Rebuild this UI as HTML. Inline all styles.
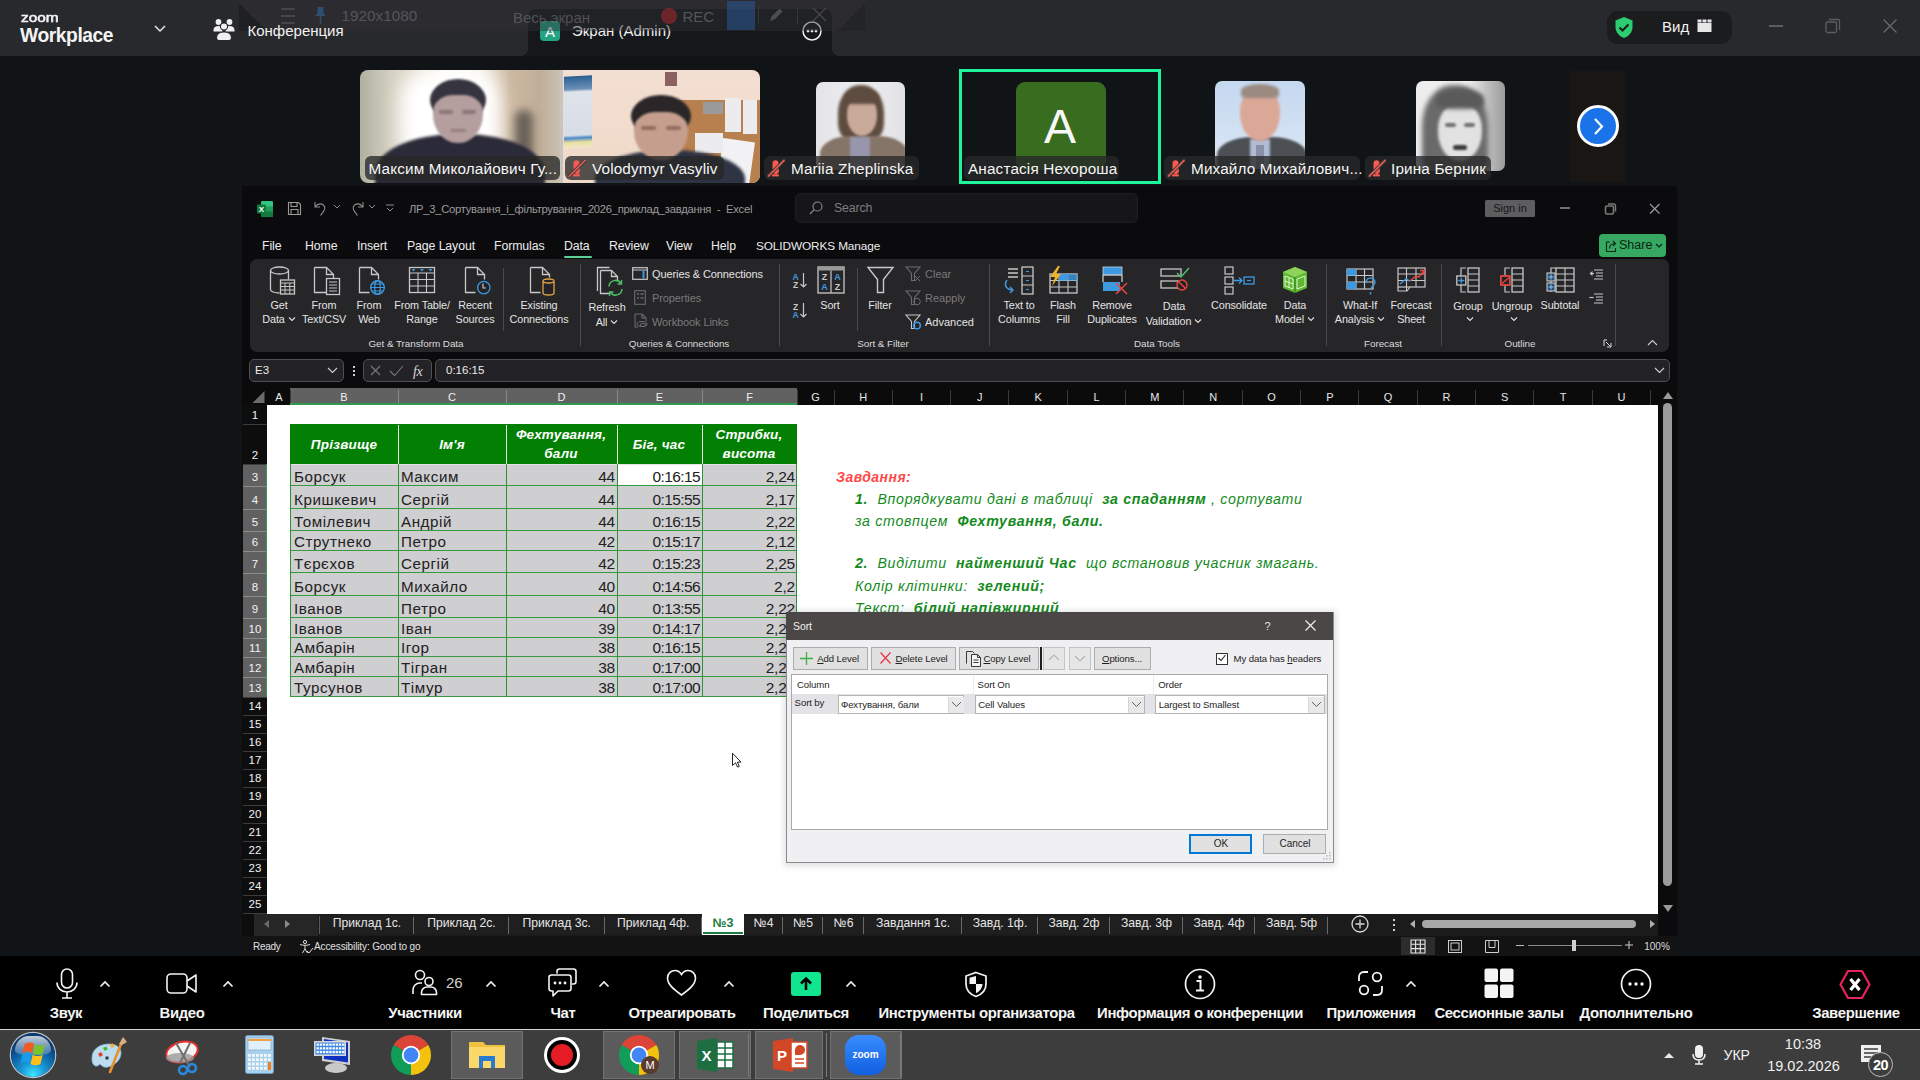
<!DOCTYPE html>
<html><head><meta charset="utf-8">
<style>
*{box-sizing:border-box}
html,body{margin:0;padding:0}
body{width:1920px;height:1080px;position:relative;overflow:hidden;background:#111417;font-family:"Liberation Sans",sans-serif;color:#fff}
.a{position:absolute}
.t{position:absolute;white-space:nowrap;line-height:1}
svg{overflow:visible}
</style></head><body>
<div class="a" style="left:0px;top:0px;width:1920px;height:56px;background:#28292c;"></div>
<div class="t" style="left:20.5px;top:10.99px;font-size:13.6px;color:#f4f4f4;font-weight:400;-webkit-text-stroke:0.6px #f4f4f4;transform:scaleX(1.13);transform-origin:0 0">zoom</div>
<div class="t" style="left:20px;top:26.16px;font-size:19.3px;color:#f4f4f4;font-weight:700;letter-spacing:-0.45px">Workplace</div>
<svg class="a" style="left:154px;top:25px;" width="12" height="8" viewBox="0 0 12 8"><path d="M1 1l5 5 5-5" fill="none" stroke="#e8e8e8" stroke-width="1.5"/></svg>
<svg class="a" style="left:213px;top:18px;" width="22" height="23" viewBox="0 0 22 23"><circle cx="5.5" cy="4" r="2.9" fill="#f0f0f0"/><circle cx="16.5" cy="4" r="2.9" fill="#f0f0f0"/><path d="M0.5 12c0-2.5 2-4 5-4s4 1 4 2v3.5h-9z M21.5 12c0-2.5-2-4-5-4s-4 1-4 2v3.5h9z" fill="#f0f0f0"/><circle cx="11" cy="8.5" r="3.6" fill="#f0f0f0" stroke="#28292c" stroke-width="1.1"/><path d="M3.5 20c0-4 3.5-6 7.5-6s7.5 2 7.5 6c0 1.5-1 2.5-2.5 2.5h-10c-1.5 0-2.5-1-2.5-2.5z" fill="#f0f0f0" stroke="#28292c" stroke-width="1.1"/></svg>
<div class="a" style="left:528px;top:9px;width:304px;height:47px;background:#15171a;border-radius:8px 8px 0 0"></div>
<div class="a" style="left:520px;top:48px;width:8px;height:8px;background:radial-gradient(circle at 0 0,#28292c 8px,#15171a 8px)"></div>
<div class="a" style="left:832px;top:48px;width:8px;height:8px;background:radial-gradient(circle at 100% 0,#28292c 8px,#15171a 8px)"></div>
<div class="a" style="left:540px;top:21px;width:20px;height:20px;background:#24a383;border-radius:4px"></div>
<div class="t" style="left:250px;width:600px;text-align:center;top:23.80px;font-size:15px;color:#ffffff;">A</div>
<div class="t" style="left:572px;top:23.30px;font-size:15px;color:#f2f2f2;">Экран (Admin)</div>
<svg class="a" style="left:802px;top:21px;" width="20" height="20" viewBox="0 0 20 20"><circle cx="10" cy="10" r="9" fill="none" stroke="#f0f0f0" stroke-width="1.5"/><circle cx="6" cy="10" r="1.4" fill="#f0f0f0"/><circle cx="10" cy="10" r="1.4" fill="#f0f0f0"/><circle cx="14" cy="10" r="1.4" fill="#f0f0f0"/></svg>
<div class="a" style="left:239px;top:0px;width:626px;height:31px;background:rgba(48,49,53,0.45);"></div>
<div class="a" style="left:239px;top:2px;width:27px;height:29px;background:linear-gradient(45deg,#1f2022 0%,#1f2022 50%,transparent 50%)"></div>
<div class="a" style="left:838px;top:2px;width:27px;height:29px;background:linear-gradient(-45deg,#232427 0%,#232427 50%,transparent 50%)"></div>
<div class="a" style="left:281px;top:8px;width:14px;height:1.5px;background:#45464a;"></div>
<div class="a" style="left:281px;top:15px;width:14px;height:1.5px;background:#45464a;"></div>
<div class="a" style="left:281px;top:22px;width:14px;height:1.5px;background:#45464a;"></div>
<svg class="a" style="left:314px;top:6px;" width="13" height="19" viewBox="0 0 13 19"><path d="M3.5 1h6v6l2.5 3H1l2.5-3z" fill="#2f4e72"/><path d="M6.5 10v8" stroke="#2f4e72" stroke-width="1.5"/></svg>
<div class="t" style="left:341.5px;top:8.05px;font-size:15.3px;color:#55565a;">1920x1080</div>
<div class="t" style="left:513px;top:10.30px;font-size:15px;color:rgba(120,121,125,0.55);">Весь экран</div>
<div class="a" style="left:661px;top:8px;width:16px;height:16px;border-radius:50%;background:rgba(200,40,50,0.45)"></div>
<div class="t" style="left:682.5px;top:9.30px;font-size:15px;color:rgba(120,121,125,0.6);">REC</div>
<div class="a" style="left:727px;top:1px;width:28px;height:29px;background:rgba(40,100,170,0.45);"></div>
<svg class="a" style="left:767px;top:6px;" width="18" height="18" viewBox="0 0 18 18"><path d="M3 15l1.5-4.5 8-8 3 3-8 8z" fill="#4c4d50"/></svg>
<div class="a" style="left:758px;top:6px;width:1px;height:18px;background:#35363a;"></div>
<div class="a" style="left:797px;top:6px;width:1px;height:18px;background:#35363a;"></div>
<svg class="a" style="left:811px;top:6px;" width="17" height="17" viewBox="0 0 17 17"><path d="M2 2l13 13M15 2L2 15" stroke="#47484c" stroke-width="1.3"/></svg>
<div class="t" style="left:247.5px;top:23.30px;font-size:15px;color:#f2f2f2;">Конференция</div>
<div class="a" style="left:1607px;top:11px;width:125px;height:33px;background:#1b1c1e;border-radius:11px"></div>
<svg class="a" style="left:1614px;top:16px;" width="20" height="23" viewBox="0 0 20 23"><path d="M10 1l8.5 3.5v6.5c0 5.5-4 9.5-8.5 11-4.5-1.5-8.5-5.5-8.5-11V4.5z" fill="#2ecc71"/><path d="M5.5 11.5l3 3 6-6" fill="none" stroke="#1b1c1e" stroke-width="2"/></svg>
<div class="t" style="left:1662px;top:19.30px;font-size:15px;color:#f2f2f2;">Вид</div>
<svg class="a" style="left:1697px;top:19px;" width="16" height="14" viewBox="0 0 16 14"><rect x="0.5" y="4" width="14" height="9" fill="#e6e6e6"/><rect x="0.5" y="0.5" width="4" height="3" fill="#e6e6e6"/><rect x="5.5" y="0.5" width="4" height="3" fill="#e6e6e6"/><rect x="10.5" y="0.5" width="4" height="3" fill="#e6e6e6"/></svg>
<div class="a" style="left:1769px;top:25px;width:14px;height:1.5px;background:#5c5d60;"></div>
<svg class="a" style="left:1825px;top:18px;" width="16" height="16" viewBox="0 0 16 16"><rect x="1" y="4" width="10.5" height="10.5" rx="1.5" fill="none" stroke="#5c5d60" stroke-width="1.3"/><path d="M4 1.5h9a1.5 1.5 0 0 1 1.5 1.5v9" fill="none" stroke="#5c5d60" stroke-width="1.3"/></svg>
<svg class="a" style="left:1882px;top:18px;" width="16" height="16" viewBox="0 0 16 16"><path d="M1.5 1.5l13 13M14.5 1.5l-13 13" stroke="#6a6b6e" stroke-width="1.3"/></svg>
<div class="a" style="left:0px;top:56px;width:1920px;height:130px;background:#111417;"></div>
<div class="a" style="left:360px;top:70px;width:200px;height:113px;overflow:hidden;border-radius:8px 0 0 8px;background:linear-gradient(90deg,#aeb0a0 0%,#d4cfc0 15%,#e6ddd0 28%,#fbf8f2 42%,#f7f0e6 60%,#cdb9a2 75%,#c0ae98 90%,#c8c0b2 100%)">
<div class="a" style="left:40px;top:0px;width:100px;height:100px;border-radius:30%;background:#ffffff;filter:blur(9px)"></div>
<div class="a" style="left:155px;top:40px;width:18px;height:50px;border-radius:8px;background:#6a625a;filter:blur(4px)"></div>
<div class="a" style="left:15px;top:64px;width:170px;height:80px;border-radius:48% 48% 0 0;background:#2b2a38;filter:blur(1.5px)"></div>
<div class="a" style="left:70px;top:9px;width:56px;height:42px;border-radius:50%;background:#36343e;filter:blur(1.2px)"></div>
<div class="a" style="left:73px;top:25px;width:50px;height:48px;border-radius:40% 40% 48% 48%/35% 35% 60% 60%;background:#b49e9e;filter:blur(1.2px)"></div>
<div class="a" style="left:79px;top:40px;width:14px;height:4px;border-radius:2px;background:#6e5a5e;opacity:0.6;filter:blur(1px)"></div>
<div class="a" style="left:102px;top:40px;width:14px;height:4px;border-radius:2px;background:#6e5a5e;opacity:0.6;filter:blur(1px)"></div>
<div class="a" style="left:90px;top:59px;width:16px;height:3px;border-radius:2px;background:#7a5e60;opacity:0.5;filter:blur(1px)"></div>
</div>
<div class="a" style="left:560px;top:70px;width:200px;height:113px;overflow:hidden;border-radius:0 8px 8px 0;background:linear-gradient(180deg,#f3dfd2 0%,#efd9c8 100%)">
<div class="a" style="left:0;top:0;width:3px;height:113px;background:#c8c4c0"></div>
<div class="a" style="left:4px;top:6px;width:28px;height:72px;transform:skewY(-3deg);background:linear-gradient(180deg,#2a5f90 0%,#6c90b8 18%,#dfe3ea 22%,#d8dde6 82%,#4c8ac8 86%,#e8e0a0 92%,#f0e8c8 100%)"></div>
<div class="a" style="left:105px;top:2px;width:12px;height:14px;background:#8a6060"></div>
<div class="a" style="left:119px;top:30px;width:81px;height:83px;background:#b8804e"></div>
<div class="a" style="left:165px;top:28px;width:16px;height:34px;background:#ececee"></div>
<div class="a" style="left:183px;top:30px;width:14px;height:34px;background:#ececee"></div>
<div class="a" style="left:160px;top:70px;width:32px;height:45px;background:#f2f2f4;transform:rotate(8deg)"></div>
<div class="a" style="left:135px;top:63px;width:28px;height:20px;background:#ececee"></div>
<div class="a" style="left:143px;top:32px;width:20px;height:12px;background:#9a9a9a"></div>
<div class="a" style="left:35px;top:80px;width:150px;height:60px;border-radius:48% 48% 0 0;background:#2e3444;filter:blur(1.5px)"></div>
<div class="a" style="left:71px;top:25px;width:60px;height:42px;border-radius:50%;background:#2a2628;filter:blur(1.2px)"></div>
<div class="a" style="left:74px;top:42px;width:54px;height:48px;border-radius:40% 40% 48% 48%/35% 35% 60% 60%;background:#c69e8e;filter:blur(1.2px)"></div>
<div class="a" style="left:81px;top:56px;width:15px;height:4px;border-radius:2px;background:#6e4a40;opacity:0.6;filter:blur(1px)"></div>
<div class="a" style="left:106px;top:56px;width:15px;height:4px;border-radius:2px;background:#6e4a40;opacity:0.6;filter:blur(1px)"></div>
</div>
<div class="a" style="left:364.5px;top:156px;width:195.0px;height:24px;border-radius:6px;background:rgba(40,40,40,0.78)"></div>
<div class="t" style="left:368.5px;top:160.75px;font-size:15.3px;color:#f6f6f6;letter-spacing:0.15px">Максим Миколайович Гу...</div>
<div class="a" style="left:560px;top:156px;width:5px;height:24px;background:#111417;opacity:0"></div>
<div class="a" style="left:565px;top:156px;width:159px;height:24px;border-radius:6px;background:rgba(40,40,40,0.78)"></div>
<svg class="a" style="left:569px;top:160px;" width="17" height="17" viewBox="0 0 17 17"><path d="M4.5 3.5a3 3.2 0 0 1 6 0V9h-6z" fill="#f65a50"/><path d="M5 9h5.8v3.2l-1.6 1.3v.8H6.6v-.8L5 12.2z" fill="#f65a50"/><rect x="4" y="14.2" width="6.8" height="2.2" fill="#f65a50"/><path d="M0 16.5L16.5 0" stroke="#3e3e3e" stroke-width="3.2"/><path d="M0.3 16.2L16.2 0.3" stroke="#f65a50" stroke-width="1.5" stroke-linecap="round"/></svg>
<div class="t" style="left:592px;top:160.75px;font-size:15.3px;color:#f6f6f6;letter-spacing:0.15px">Volodymyr Vasyliv</div>
<div class="a" style="left:816px;top:82px;width:89px;height:88px;overflow:hidden;border-radius:7px;background:linear-gradient(90deg,#e4e4e6,#eeeef0 50%,#e2e2e4)">
<div class="a" style="left:22px;top:3px;width:46px;height:58px;border-radius:48% 48% 35% 35%;background:#5e4c40;filter:blur(1.5px)"></div>
<div class="a" style="left:4px;top:54px;width:88px;height:50px;border-radius:35% 35% 0 0;background:#857568;filter:blur(1px)"></div>
<div class="a" style="left:34px;top:55px;width:20px;height:35px;background:#9896ac;filter:blur(1px)"></div>
<div class="a" style="left:31px;top:14px;width:30px;height:40px;border-radius:45% 45% 50% 50%;background:#c9aa9a;filter:blur(1.2px)"></div>
<div class="a" style="left:29px;top:8px;width:34px;height:14px;border-radius:50% 50% 20% 20%;background:#5e4c40;filter:blur(1.5px)"></div>
</div>
<div class="a" style="left:764px;top:156px;width:155px;height:24px;border-radius:6px;background:rgba(40,40,40,0.78)"></div>
<svg class="a" style="left:768px;top:160px;" width="17" height="17" viewBox="0 0 17 17"><path d="M4.5 3.5a3 3.2 0 0 1 6 0V9h-6z" fill="#f65a50"/><path d="M5 9h5.8v3.2l-1.6 1.3v.8H6.6v-.8L5 12.2z" fill="#f65a50"/><rect x="4" y="14.2" width="6.8" height="2.2" fill="#f65a50"/><path d="M0 16.5L16.5 0" stroke="#3e3e3e" stroke-width="3.2"/><path d="M0.3 16.2L16.2 0.3" stroke="#f65a50" stroke-width="1.5" stroke-linecap="round"/></svg>
<div class="t" style="left:791px;top:160.75px;font-size:15.3px;color:#f6f6f6;letter-spacing:0.15px">Mariia Zheplinska</div>
<div class="a" style="left:959px;top:69px;width:202px;height:115px;background:transparent;border:3px solid #1ef59a"></div>
<div class="a" style="left:1015.5px;top:82px;width:90px;height:88px;background:#386d20;border-radius:9px"></div>
<div class="t" style="left:760px;width:600px;text-align:center;top:102.97px;font-size:48px;color:#f8f8f8;">A</div>
<div class="a" style="left:964px;top:156px;width:155px;height:24px;border-radius:6px;background:rgba(40,40,40,0.78)"></div>
<div class="t" style="left:968px;top:160.75px;font-size:15.3px;color:#f6f6f6;letter-spacing:0.15px">Анастасія Нехороша</div>
<div class="a" style="left:1215px;top:81px;width:90px;height:88px;overflow:hidden;border-radius:7px;background:linear-gradient(180deg,#c4d8f0,#dde8f5)">
<div class="a" style="left:2px;top:56px;width:90px;height:45px;border-radius:40% 40% 0 0;background:#4c4f54;filter:blur(1px)"></div>
<div class="a" style="left:35px;top:58px;width:20px;height:30px;background:#b0bcd4;filter:blur(1px)"></div>
<div class="a" style="left:41px;top:64px;width:8px;height:24px;background:#8890a8"></div>
<div class="a" style="left:25px;top:6px;width:40px;height:54px;border-radius:45% 45% 50% 50%;background:#dba898;filter:blur(1.2px)"></div>
<div class="a" style="left:26px;top:3px;width:38px;height:14px;border-radius:50% 50% 20% 20%;background:#9a8a80;filter:blur(1.5px)"></div>
</div>
<div class="a" style="left:1164px;top:156px;width:196px;height:24px;border-radius:6px;background:rgba(40,40,40,0.78)"></div>
<svg class="a" style="left:1168px;top:160px;" width="17" height="17" viewBox="0 0 17 17"><path d="M4.5 3.5a3 3.2 0 0 1 6 0V9h-6z" fill="#f65a50"/><path d="M5 9h5.8v3.2l-1.6 1.3v.8H6.6v-.8L5 12.2z" fill="#f65a50"/><rect x="4" y="14.2" width="6.8" height="2.2" fill="#f65a50"/><path d="M0 16.5L16.5 0" stroke="#3e3e3e" stroke-width="3.2"/><path d="M0.3 16.2L16.2 0.3" stroke="#f65a50" stroke-width="1.5" stroke-linecap="round"/></svg>
<div class="t" style="left:1191px;top:160.75px;font-size:15.3px;color:#f6f6f6;letter-spacing:0.15px">Михайло Михайлович...</div>
<div class="a" style="left:1416px;top:81px;width:89px;height:90px;overflow:hidden;border-radius:7px;background:linear-gradient(90deg,#ececec,#f4f4f4 55%,#c4c4c4 78%,#9a9a9a)">
<div class="a" style="left:6px;top:4px;width:66px;height:92px;border-radius:45% 45% 20% 20%;background:#6a6a6a;filter:blur(2.5px)"></div>
<div class="a" style="left:22px;top:22px;width:44px;height:58px;border-radius:45% 45% 50% 50%;background:#e2e2e2;filter:blur(1.5px)"></div>
<div class="a" style="left:20px;top:8px;width:48px;height:20px;border-radius:50% 50% 30% 30%;background:#5a5a5a;filter:blur(2px)"></div>
<div class="a" style="left:29px;top:42px;width:11px;height:4px;border-radius:2px;background:#707070;filter:blur(0.8px)"></div>
<div class="a" style="left:48px;top:42px;width:11px;height:4px;border-radius:2px;background:#707070;filter:blur(0.8px)"></div>
<div class="a" style="left:37px;top:64px;width:14px;height:5px;border-radius:3px;background:#3a3a3a;filter:blur(0.8px)"></div>
</div>
<div class="a" style="left:1364.5px;top:156px;width:126.0px;height:24px;border-radius:6px;background:rgba(40,40,40,0.78)"></div>
<svg class="a" style="left:1368.5px;top:160px;" width="17" height="17" viewBox="0 0 17 17"><path d="M4.5 3.5a3 3.2 0 0 1 6 0V9h-6z" fill="#f65a50"/><path d="M5 9h5.8v3.2l-1.6 1.3v.8H6.6v-.8L5 12.2z" fill="#f65a50"/><rect x="4" y="14.2" width="6.8" height="2.2" fill="#f65a50"/><path d="M0 16.5L16.5 0" stroke="#3e3e3e" stroke-width="3.2"/><path d="M0.3 16.2L16.2 0.3" stroke="#f65a50" stroke-width="1.5" stroke-linecap="round"/></svg>
<div class="t" style="left:1391px;top:160.75px;font-size:15.3px;color:#f6f6f6;letter-spacing:0.15px">Ірина Берник</div>
<div class="a" style="left:1569.5px;top:70.5px;width:55px;height:111.5px;background:#1a1614;"></div>
<div class="a" style="left:1577px;top:105px;width:42px;height:42px;border-radius:50%;background:#1a73e8;border:3.5px solid #fff"></div>
<svg class="a" style="left:1590px;top:116px;" width="16" height="22" viewBox="0 0 16 22"><path d="M5 3l7 7.5-7 7.5" fill="none" stroke="#fff" stroke-width="2.2"/></svg>
<div class="a" style="left:242px;top:186px;width:1435px;height:770px;background:#0b0b0d;"></div>
<svg class="a" style="left:257px;top:201px;" width="16" height="16" viewBox="0 0 16 16"><rect x="4" y="0" width="12" height="16" rx="1.5" fill="#1e9e5a"/><rect x="4" y="0" width="12" height="5.5" fill="#33c481" rx="1.5"/><rect x="4" y="10.5" width="12" height="5.5" fill="#107c41" rx="1"/><rect x="0" y="3.5" width="9" height="9" rx="1" fill="#0f7b3f"/><text x="4.5" y="11" font-size="8" font-family="Liberation Sans" font-weight="700" fill="#fff" text-anchor="middle">X</text></svg>
<svg class="a" style="left:287px;top:201px;" width="15" height="15" viewBox="0 0 15 15"><path d="M1.5 1.5h10l2 2v10h-12z M4 1.5v4h6v-4 M4 13.5v-5h7v5" fill="none" stroke="#9a9a9a" stroke-width="1.1"/></svg>
<svg class="a" style="left:313px;top:200px;" width="16" height="16" viewBox="0 0 16 16"><path d="M2 2v5h5 M2.5 6.5c2-3 7-4 9 0 1.5 3-1 5-4 9" fill="none" stroke="#8c8c8c" stroke-width="1.1"/></svg>
<svg class="a" style="left:333px;top:204px;" width="8" height="6" viewBox="0 0 8 6"><path d="M1 1l3 3 3-3" fill="none" stroke="#8c8c8c"/></svg>
<svg class="a" style="left:349px;top:200px;" width="16" height="16" viewBox="0 0 16 16"><path d="M14 2v5h-5 M13.5 6.5c-2-3-7-4-9 0-1.5 3 1 5 4 9" fill="none" stroke="#8c8c8c" stroke-width="1.1"/></svg>
<svg class="a" style="left:368px;top:204px;" width="8" height="6" viewBox="0 0 8 6"><path d="M1 1l3 3 3-3" fill="none" stroke="#8c8c8c"/></svg>
<svg class="a" style="left:385px;top:204px;" width="10" height="9" viewBox="0 0 10 9"><path d="M1 1h8 M2 4l3 3 3-3" fill="none" stroke="#8c8c8c"/></svg>
<div class="t" style="left:409px;top:204.02px;font-size:11.2px;color:#9c9c9c;letter-spacing:-0.25px">ЛР_3_Сортування_і_фільтрування_2026_приклад_завдання&nbsp; -&nbsp; Excel</div>
<div class="a" style="left:795px;top:193px;width:343px;height:30px;background:#161519;border-radius:5px;border:1px solid #1e1d21"></div>
<svg class="a" style="left:808px;top:200px;" width="16" height="16" viewBox="0 0 16 16"><circle cx="9.5" cy="6.5" r="4.5" fill="none" stroke="#8a8a8a" stroke-width="1.1"/><path d="M6.3 9.7L2 14" stroke="#8a8a8a" stroke-width="1.2"/></svg>
<div class="t" style="left:834px;top:202.09px;font-size:12.3px;color:#7e7e80;letter-spacing:-0.1px">Search</div>
<div class="a" style="left:1485px;top:199.5px;width:50px;height:17.5px;background:#5e5d60;border-radius:1.5px"></div>
<div class="t" style="left:1210px;width:600px;text-align:center;top:202.99px;font-size:11px;color:#161616;">Sign in</div>
<div class="a" style="left:1560px;top:207px;width:10px;height:2px;background:#6e6e6e;"></div>
<svg class="a" style="left:1603px;top:202px;" width="14" height="14" viewBox="0 0 14 14"><rect x="2.5" y="4" width="8" height="8" rx="1.5" fill="none" stroke="#7a7a7a" stroke-width="1.6"/><path d="M5 2h5.5a2 2 0 0 1 2 2v5.5" fill="none" stroke="#7a7a7a" stroke-width="1.4"/></svg>
<svg class="a" style="left:1648px;top:202px;" width="13" height="13" viewBox="0 0 13 13"><path d="M2 2l9.5 9.5M11.5 2L2 11.5" stroke="#a0a0a0" stroke-width="1.1"/></svg>
<div class="t" style="left:262px;top:240.09px;font-size:12.3px;color:#ededed;letter-spacing:-0.1px">File</div>
<div class="t" style="left:305px;top:240.09px;font-size:12.3px;color:#ededed;letter-spacing:-0.1px">Home</div>
<div class="t" style="left:357px;top:240.09px;font-size:12.3px;color:#ededed;letter-spacing:-0.1px">Insert</div>
<div class="t" style="left:407px;top:240.09px;font-size:12.3px;color:#ededed;letter-spacing:-0.1px">Page Layout</div>
<div class="t" style="left:494px;top:240.09px;font-size:12.3px;color:#ededed;letter-spacing:-0.1px">Formulas</div>
<div class="t" style="left:564px;top:240.09px;font-size:12.3px;color:#ededed;letter-spacing:-0.1px">Data</div>
<div class="t" style="left:609px;top:240.09px;font-size:12.3px;color:#ededed;letter-spacing:-0.1px">Review</div>
<div class="t" style="left:666px;top:240.09px;font-size:12.3px;color:#ededed;letter-spacing:-0.1px">View</div>
<div class="t" style="left:711px;top:240.09px;font-size:12.3px;color:#ededed;letter-spacing:-0.1px">Help</div>
<div class="t" style="left:756px;top:240.51px;font-size:11.8px;color:#ededed;letter-spacing:-0.1px">SOLIDWORKS Manage</div>
<div class="a" style="left:564px;top:255.5px;width:28px;height:2px;background:#5fcf98;border-radius:1px"></div>
<div class="a" style="left:1599px;top:234px;width:67px;height:23px;background:#36a862;border-radius:4px"></div>
<svg class="a" style="left:1604px;top:239px;" width="14" height="14" viewBox="0 0 14 14"><path d="M6 3H2.5v9.5h9V9 M5.5 9.5c0-3 2-5 5.5-5 M9 2l2.5 2.5L9 7" fill="none" stroke="#0b2a16" stroke-width="1.1"/></svg>
<div class="t" style="left:1619px;top:239.42px;font-size:12.5px;color:#0b1f12;">Share</div>
<svg class="a" style="left:1655px;top:243px;" width="8" height="6" viewBox="0 0 8 6"><path d="M1 1l3 3 3-3" fill="none" stroke="#0b1f12" stroke-width="1.1"/></svg>
<div class="a" style="left:250px;top:259px;width:1419px;height:93px;background:#262528;border-radius:7px"></div>
<div class="a" style="left:503px;top:268px;width:1px;height:63px;background:#4a4a4a;"></div>
<div class="a" style="left:580px;top:264px;width:1px;height:82px;background:#4a4a4a;"></div>
<div class="a" style="left:779px;top:264px;width:1px;height:82px;background:#4a4a4a;"></div>
<div class="a" style="left:857px;top:268px;width:1px;height:63px;background:#4a4a4a;"></div>
<div class="a" style="left:989px;top:264px;width:1px;height:82px;background:#4a4a4a;"></div>
<div class="a" style="left:1326px;top:264px;width:1px;height:82px;background:#4a4a4a;"></div>
<div class="a" style="left:1441px;top:264px;width:1px;height:82px;background:#4a4a4a;"></div>
<div class="a" style="left:1615px;top:264px;width:1px;height:82px;background:#4a4a4a;"></div>
<div class="t" style="left:-21px;width:600px;text-align:center;top:299.86px;font-size:10.8px;color:#e4e4e4;letter-spacing:-0.1px">Get</div>
<div class="t" style="left:-21px;width:600px;text-align:center;top:314.36px;font-size:10.8px;color:#e4e4e4;letter-spacing:-0.1px">Data<svg width="8" height="6" style="margin-left:3px;vertical-align:1px" viewBox="0 0 8 6"><path d="M1 1.5l3 3 3-3" fill="none" stroke="#e0e0e0" stroke-width="1.1"/></svg></div>
<div class="t" style="left:24px;width:600px;text-align:center;top:299.86px;font-size:10.8px;color:#e4e4e4;letter-spacing:-0.1px">From</div>
<div class="t" style="left:24px;width:600px;text-align:center;top:314.36px;font-size:10.8px;color:#e4e4e4;letter-spacing:-0.1px">Text/CSV</div>
<div class="t" style="left:69px;width:600px;text-align:center;top:299.86px;font-size:10.8px;color:#e4e4e4;letter-spacing:-0.1px">From</div>
<div class="t" style="left:69px;width:600px;text-align:center;top:314.36px;font-size:10.8px;color:#e4e4e4;letter-spacing:-0.1px">Web</div>
<div class="t" style="left:122px;width:600px;text-align:center;top:299.86px;font-size:10.8px;color:#e4e4e4;letter-spacing:-0.1px">From Table/</div>
<div class="t" style="left:122px;width:600px;text-align:center;top:314.36px;font-size:10.8px;color:#e4e4e4;letter-spacing:-0.1px">Range</div>
<div class="t" style="left:175px;width:600px;text-align:center;top:299.86px;font-size:10.8px;color:#e4e4e4;letter-spacing:-0.1px">Recent</div>
<div class="t" style="left:175px;width:600px;text-align:center;top:314.36px;font-size:10.8px;color:#e4e4e4;letter-spacing:-0.1px">Sources</div>
<div class="t" style="left:239px;width:600px;text-align:center;top:299.86px;font-size:10.8px;color:#e4e4e4;letter-spacing:-0.1px">Existing</div>
<div class="t" style="left:239px;width:600px;text-align:center;top:314.36px;font-size:10.8px;color:#e4e4e4;letter-spacing:-0.1px">Connections</div>
<div class="t" style="left:307px;width:600px;text-align:center;top:301.86px;font-size:10.8px;color:#e4e4e4;letter-spacing:-0.1px">Refresh</div>
<div class="t" style="left:307px;width:600px;text-align:center;top:316.86px;font-size:10.8px;color:#e4e4e4;letter-spacing:-0.1px">All<svg width="8" height="6" style="margin-left:3px;vertical-align:1px" viewBox="0 0 8 6"><path d="M1 1.5l3 3 3-3" fill="none" stroke="#e0e0e0" stroke-width="1.1"/></svg></div>
<div class="t" style="left:652px;top:268.69px;font-size:11px;color:#e4e4e4;letter-spacing:-0.1px">Queries &amp; Connections</div>
<div class="t" style="left:652px;top:292.69px;font-size:11px;color:#7a7a7a;letter-spacing:-0.1px">Properties</div>
<div class="t" style="left:652px;top:316.69px;font-size:11px;color:#7a7a7a;letter-spacing:-0.1px">Workbook Links</div>
<div class="t" style="left:530px;width:600px;text-align:center;top:299.86px;font-size:10.8px;color:#e4e4e4;letter-spacing:-0.1px">Sort</div>
<div class="t" style="left:580px;width:600px;text-align:center;top:299.86px;font-size:10.8px;color:#e4e4e4;letter-spacing:-0.1px">Filter</div>
<div class="t" style="left:925px;top:268.69px;font-size:11px;color:#7a7a7a;">Clear</div>
<div class="t" style="left:925px;top:292.69px;font-size:11px;color:#7a7a7a;">Reapply</div>
<div class="t" style="left:925px;top:316.69px;font-size:11px;color:#e4e4e4;">Advanced</div>
<div class="t" style="left:719px;width:600px;text-align:center;top:299.86px;font-size:10.8px;color:#e4e4e4;letter-spacing:-0.1px">Text to</div>
<div class="t" style="left:719px;width:600px;text-align:center;top:314.36px;font-size:10.8px;color:#e4e4e4;letter-spacing:-0.1px">Columns</div>
<div class="t" style="left:763px;width:600px;text-align:center;top:299.86px;font-size:10.8px;color:#e4e4e4;letter-spacing:-0.1px">Flash</div>
<div class="t" style="left:763px;width:600px;text-align:center;top:314.36px;font-size:10.8px;color:#e4e4e4;letter-spacing:-0.1px">Fill</div>
<div class="t" style="left:812px;width:600px;text-align:center;top:299.86px;font-size:10.8px;color:#e4e4e4;letter-spacing:-0.1px">Remove</div>
<div class="t" style="left:812px;width:600px;text-align:center;top:314.36px;font-size:10.8px;color:#e4e4e4;letter-spacing:-0.1px">Duplicates</div>
<div class="t" style="left:874px;width:600px;text-align:center;top:300.86px;font-size:10.8px;color:#e4e4e4;letter-spacing:-0.1px">Data</div>
<div class="t" style="left:874px;width:600px;text-align:center;top:315.86px;font-size:10.8px;color:#e4e4e4;letter-spacing:-0.1px">Validation<svg width="8" height="6" style="margin-left:3px;vertical-align:1px" viewBox="0 0 8 6"><path d="M1 1.5l3 3 3-3" fill="none" stroke="#e0e0e0" stroke-width="1.1"/></svg></div>
<div class="t" style="left:939px;width:600px;text-align:center;top:299.86px;font-size:10.8px;color:#e4e4e4;letter-spacing:-0.1px">Consolidate</div>
<div class="t" style="left:995px;width:600px;text-align:center;top:299.86px;font-size:10.8px;color:#e4e4e4;letter-spacing:-0.1px">Data</div>
<div class="t" style="left:995px;width:600px;text-align:center;top:314.36px;font-size:10.8px;color:#e4e4e4;letter-spacing:-0.1px">Model<svg width="8" height="6" style="margin-left:3px;vertical-align:1px" viewBox="0 0 8 6"><path d="M1 1.5l3 3 3-3" fill="none" stroke="#e0e0e0" stroke-width="1.1"/></svg></div>
<div class="t" style="left:1060px;width:600px;text-align:center;top:299.86px;font-size:10.8px;color:#e4e4e4;letter-spacing:-0.1px">What-If</div>
<div class="t" style="left:1060px;width:600px;text-align:center;top:314.36px;font-size:10.8px;color:#e4e4e4;letter-spacing:-0.1px">Analysis<svg width="8" height="6" style="margin-left:3px;vertical-align:1px" viewBox="0 0 8 6"><path d="M1 1.5l3 3 3-3" fill="none" stroke="#e0e0e0" stroke-width="1.1"/></svg></div>
<div class="t" style="left:1111px;width:600px;text-align:center;top:299.86px;font-size:10.8px;color:#e4e4e4;letter-spacing:-0.1px">Forecast</div>
<div class="t" style="left:1111px;width:600px;text-align:center;top:314.36px;font-size:10.8px;color:#e4e4e4;letter-spacing:-0.1px">Sheet</div>
<div class="t" style="left:1168px;width:600px;text-align:center;top:300.86px;font-size:10.8px;color:#e4e4e4;letter-spacing:-0.1px">Group</div>
<div class="t" style="left:1168px;width:600px;text-align:center;top:314.36px;font-size:10.8px;color:#e4e4e4;letter-spacing:-0.1px"><svg width="8" height="6" style="margin-left:3px;vertical-align:1px" viewBox="0 0 8 6"><path d="M1 1.5l3 3 3-3" fill="none" stroke="#e0e0e0" stroke-width="1.1"/></svg></div>
<div class="t" style="left:1212px;width:600px;text-align:center;top:300.86px;font-size:10.8px;color:#e4e4e4;letter-spacing:-0.1px">Ungroup</div>
<div class="t" style="left:1212px;width:600px;text-align:center;top:314.36px;font-size:10.8px;color:#e4e4e4;letter-spacing:-0.1px"><svg width="8" height="6" style="margin-left:3px;vertical-align:1px" viewBox="0 0 8 6"><path d="M1 1.5l3 3 3-3" fill="none" stroke="#e0e0e0" stroke-width="1.1"/></svg></div>
<div class="t" style="left:1260px;width:600px;text-align:center;top:299.86px;font-size:10.8px;color:#e4e4e4;letter-spacing:-0.1px">Subtotal</div>
<div class="t" style="left:116px;width:600px;text-align:center;top:338.62px;font-size:9.9px;color:#dcdcdc;letter-spacing:-0.05px">Get &amp; Transform Data</div>
<div class="t" style="left:379px;width:600px;text-align:center;top:338.62px;font-size:9.9px;color:#dcdcdc;letter-spacing:-0.05px">Queries &amp; Connections</div>
<div class="t" style="left:583px;width:600px;text-align:center;top:338.62px;font-size:9.9px;color:#dcdcdc;letter-spacing:-0.05px">Sort &amp; Filter</div>
<div class="t" style="left:857px;width:600px;text-align:center;top:338.62px;font-size:9.9px;color:#dcdcdc;letter-spacing:-0.05px">Data Tools</div>
<div class="t" style="left:1083px;width:600px;text-align:center;top:338.62px;font-size:9.9px;color:#dcdcdc;letter-spacing:-0.05px">Forecast</div>
<div class="t" style="left:1220px;width:600px;text-align:center;top:338.62px;font-size:9.9px;color:#dcdcdc;letter-spacing:-0.05px">Outline</div>
<svg class="a" style="left:1603px;top:339px;" width="9" height="9" viewBox="0 0 9 9"><path d="M1 7V1h3 M8 4v4H4 M3 3l4.5 4.5" fill="none" stroke="#dcdcdc" stroke-width="1"/></svg>
<svg class="a" style="left:1647px;top:339px;" width="11" height="7" viewBox="0 0 11 7"><path d="M1 6l4.5-4.5L10 6" fill="none" stroke="#cfcfcf" stroke-width="1.1"/></svg>
<div class="a" style="left:249px;top:359px;width:95px;height:23px;background:#232226;border:1px solid #505050;border-radius:5px"></div>
<div class="t" style="left:255px;top:365.27px;font-size:11.5px;color:#ececec;">E3</div>
<svg class="a" style="left:327px;top:367px;" width="11" height="7" viewBox="0 0 11 7"><path d="M1 1l4.5 4.5L10 1" fill="none" stroke="#cfcfcf" stroke-width="1.1"/></svg>
<div class="a" style="left:353px;top:366px;width:2px;height:2.2px;background:#d0d0d0;"></div>
<div class="a" style="left:353px;top:370px;width:2px;height:2.2px;background:#d0d0d0;"></div>
<div class="a" style="left:353px;top:374px;width:2px;height:2.2px;background:#d0d0d0;"></div>
<div class="a" style="left:363px;top:359px;width:69px;height:23px;background:#232226;border:1px solid #505050;border-radius:5px"></div>
<svg class="a" style="left:369px;top:364px;" width="13" height="13" viewBox="0 0 13 13"><path d="M2 2l9 9M11 2l-9 9" stroke="#7a7a7a" stroke-width="1.1"/></svg>
<svg class="a" style="left:389px;top:364px;" width="15" height="13" viewBox="0 0 15 13"><path d="M1 7l4.5 4.5L14 2" fill="none" stroke="#7a7a7a" stroke-width="1.1"/></svg>
<div class="t" style="left:413px;top:365.15px;font-size:14px;color:#d8d8d8;font-family:'Liberation Serif';letter-spacing:-0.5px"><i>fx</i></div>
<div class="a" style="left:435px;top:359px;width:1235px;height:23px;background:#232226;border:1px solid #505050;border-radius:5px"></div>
<div class="t" style="left:446px;top:365.27px;font-size:11.5px;color:#ececec;">0:16:15</div>
<svg class="a" style="left:1654px;top:367px;" width="11" height="7" viewBox="0 0 11 7"><path d="M1 1l4.5 4.5L10 1" fill="none" stroke="#cfcfcf" stroke-width="1.1"/></svg>
<div class="a" style="left:242px;top:914px;width:1416px;height:22px;background:#1b1b1b;"></div>
<div class="a" style="left:242px;top:914px;width:12px;height:22px;background:#0d0d0d;"></div>
<div class="a" style="left:254px;top:914px;width:64px;height:22px;background:#262626;"></div>
<svg class="a" style="left:260px;top:917px;" width="14" height="14" viewBox="0 0 14 14"><polygon points="9,3 9,11 4,7" fill="#6a6a6a"/></svg>
<svg class="a" style="left:280px;top:917px;" width="14" height="14" viewBox="0 0 14 14"><polygon points="5,3 5,11 10,7" fill="#8a8a8a"/></svg>
<div class="a" style="left:319px;top:916px;width:1px;height:18px;background:#5a5a5a;"></div>
<div class="a" style="left:320px;top:915px;width:94px;height:19px;background:#1f1f1f;"></div>
<div class="t" style="left:67.0px;width:600px;text-align:center;top:917.17px;font-size:12.2px;color:#e6e6e6;">Приклад 1с.</div>
<div class="a" style="left:413px;top:917px;width:1px;height:17px;background:#6a6a6a;"></div>
<div class="a" style="left:414px;top:915px;width:95px;height:19px;background:#1f1f1f;"></div>
<div class="t" style="left:161.5px;width:600px;text-align:center;top:917.17px;font-size:12.2px;color:#e6e6e6;">Приклад 2с.</div>
<div class="a" style="left:508px;top:917px;width:1px;height:17px;background:#6a6a6a;"></div>
<div class="a" style="left:509px;top:915px;width:95.5px;height:19px;background:#1f1f1f;"></div>
<div class="t" style="left:256.75px;width:600px;text-align:center;top:917.17px;font-size:12.2px;color:#e6e6e6;">Приклад 3с.</div>
<div class="a" style="left:603.5px;top:917px;width:1px;height:17px;background:#6a6a6a;"></div>
<div class="a" style="left:604.5px;top:915px;width:97.5px;height:19px;background:#1f1f1f;"></div>
<div class="t" style="left:353.25px;width:600px;text-align:center;top:917.17px;font-size:12.2px;color:#e6e6e6;">Приклад 4ф.</div>
<div class="a" style="left:701px;top:917px;width:1px;height:17px;background:#6a6a6a;"></div>
<div class="a" style="left:702px;top:914px;width:42px;height:21px;background:#ffffff;"></div>
<div class="a" style="left:703px;top:932px;width:40px;height:2px;background:#1e7a45;"></div>
<div class="t" style="left:423.0px;width:600px;text-align:center;top:916.92px;font-size:12.5px;color:#1a7a3c;font-weight:700">№3</div>
<div class="a" style="left:744px;top:915px;width:39px;height:19px;background:#1f1f1f;"></div>
<div class="t" style="left:463.5px;width:600px;text-align:center;top:917.17px;font-size:12.2px;color:#e6e6e6;">№4</div>
<div class="a" style="left:782px;top:917px;width:1px;height:17px;background:#6a6a6a;"></div>
<div class="a" style="left:783px;top:915px;width:40px;height:19px;background:#1f1f1f;"></div>
<div class="t" style="left:503.0px;width:600px;text-align:center;top:917.17px;font-size:12.2px;color:#e6e6e6;">№5</div>
<div class="a" style="left:822px;top:917px;width:1px;height:17px;background:#6a6a6a;"></div>
<div class="a" style="left:823px;top:915px;width:41px;height:19px;background:#1f1f1f;"></div>
<div class="t" style="left:543.5px;width:600px;text-align:center;top:917.17px;font-size:12.2px;color:#e6e6e6;">№6</div>
<div class="a" style="left:863px;top:917px;width:1px;height:17px;background:#6a6a6a;"></div>
<div class="a" style="left:864px;top:915px;width:98px;height:19px;background:#1f1f1f;"></div>
<div class="t" style="left:613.0px;width:600px;text-align:center;top:917.17px;font-size:12.2px;color:#e6e6e6;">Завдання 1с.</div>
<div class="a" style="left:961px;top:917px;width:1px;height:17px;background:#6a6a6a;"></div>
<div class="a" style="left:962px;top:915px;width:76px;height:19px;background:#1f1f1f;"></div>
<div class="t" style="left:700.0px;width:600px;text-align:center;top:917.17px;font-size:12.2px;color:#e6e6e6;">Завд. 1ф.</div>
<div class="a" style="left:1037px;top:917px;width:1px;height:17px;background:#6a6a6a;"></div>
<div class="a" style="left:1038px;top:915px;width:72px;height:19px;background:#1f1f1f;"></div>
<div class="t" style="left:774.0px;width:600px;text-align:center;top:917.17px;font-size:12.2px;color:#e6e6e6;">Завд. 2ф</div>
<div class="a" style="left:1109px;top:917px;width:1px;height:17px;background:#6a6a6a;"></div>
<div class="a" style="left:1110px;top:915px;width:73px;height:19px;background:#1f1f1f;"></div>
<div class="t" style="left:846.5px;width:600px;text-align:center;top:917.17px;font-size:12.2px;color:#e6e6e6;">Завд. 3ф</div>
<div class="a" style="left:1182px;top:917px;width:1px;height:17px;background:#6a6a6a;"></div>
<div class="a" style="left:1183px;top:915px;width:72px;height:19px;background:#1f1f1f;"></div>
<div class="t" style="left:919.0px;width:600px;text-align:center;top:917.17px;font-size:12.2px;color:#e6e6e6;">Завд. 4ф</div>
<div class="a" style="left:1254px;top:917px;width:1px;height:17px;background:#6a6a6a;"></div>
<div class="a" style="left:1255px;top:915px;width:73px;height:19px;background:#1f1f1f;"></div>
<div class="t" style="left:991.5px;width:600px;text-align:center;top:917.17px;font-size:12.2px;color:#e6e6e6;">Завд. 5ф</div>
<div class="a" style="left:1327px;top:917px;width:1px;height:17px;background:#6a6a6a;"></div>
<svg class="a" style="left:1350px;top:914px;" width="20" height="20" viewBox="0 0 20 20"><circle cx="10" cy="10" r="8" fill="none" stroke="#d8d8d8" stroke-width="1.3"/><path d="M10 5.5v9M5.5 10h9" stroke="#d8d8d8" stroke-width="1.3"/></svg>
<div class="a" style="left:1393px;top:919px;width:2px;height:2.2px;background:#d0d0d0;"></div>
<div class="a" style="left:1393px;top:924px;width:2px;height:2.2px;background:#d0d0d0;"></div>
<div class="a" style="left:1393px;top:929px;width:2px;height:2.2px;background:#d0d0d0;"></div>
<svg class="a" style="left:1405px;top:917px;" width="14" height="14" viewBox="0 0 14 14"><polygon points="10,3 10,11 5,7" fill="#b0b0b0"/></svg>
<div class="a" style="left:1422px;top:920px;width:214px;height:8px;background:#a8a8a8;border-radius:4px"></div>
<svg class="a" style="left:1645px;top:917px;" width="14" height="14" viewBox="0 0 14 14"><polygon points="5,3 5,11 10,7" fill="#b0b0b0"/></svg>
<div class="a" style="left:242px;top:936px;width:1435px;height:20px;background:#131313;"></div>
<div class="t" style="left:253px;top:941.53px;font-size:10px;color:#e0e0e0;letter-spacing:-0.3px">Ready</div>
<svg class="a" style="left:298px;top:939px;" width="16" height="16" viewBox="0 0 16 16"><circle cx="7" cy="3" r="1.6" fill="none" stroke="#ddd"/><path d="M2 5.5c2 1 8 1 10 0 M7 6v4 M4.5 14l2.5-4 2.5 4 M9 12l2 2 4-5" fill="none" stroke="#ddd" stroke-width="1"/></svg>
<div class="t" style="left:314px;top:941.53px;font-size:10px;color:#e0e0e0;letter-spacing:-0.12px">Accessibility: Good to go</div>
<div class="a" style="left:1401px;top:937px;width:34px;height:18px;background:#2c2c2c;"></div>
<svg class="a" style="left:1410px;top:939px;" width="16" height="15" viewBox="0 0 16 15"><path d="M1 1h14v13H1z M1 5.3h14 M1 9.6h14 M5.6 1v13 M10.3 1v13" fill="none" stroke="#e6e6e6" stroke-width="1.1"/></svg>
<svg class="a" style="left:1447px;top:939px;" width="16" height="15" viewBox="0 0 16 15"><rect x="1.5" y="1.5" width="13" height="12" fill="none" stroke="#cfcfcf"/><rect x="4" y="4" width="8" height="7" fill="none" stroke="#cfcfcf"/></svg>
<svg class="a" style="left:1484px;top:939px;" width="16" height="15" viewBox="0 0 16 15"><path d="M1.5 1.5h13v12h-13z M5 1.5v7h6v-7" fill="none" stroke="#cfcfcf"/></svg>
<div class="a" style="left:1516px;top:945px;width:8px;height:1px;background:#bcbcbc;"></div>
<div class="a" style="left:1528px;top:945px;width:94px;height:1px;background:#8a8a8a;"></div>
<div class="a" style="left:1572px;top:940px;width:4px;height:11px;background:#cfcfcf;"></div>
<svg class="a" style="left:1624px;top:940px;" width="10" height="10" viewBox="0 0 10 10"><path d="M5 1v8M1 5h8" stroke="#cfcfcf"/></svg>
<div class="t" style="left:1357px;width:600px;text-align:center;top:941.53px;font-size:10px;color:#dcdcdc;">100%</div>
<svg class="a" style="left:269px;top:266px;" width="28" height="30" viewBox="0 0 28 30"><path d="M1.5 4.5v19c0 2 4 3.5 9 3.5 M1.5 4.5c0-2 4-3.5 9-3.5s9 1.5 9 3.5-4 3.5-9 3.5-9-1.5-9-3.5 M19.5 4.5v9" fill="none" stroke="#c8c8c8" stroke-width="1.3"/><rect x="11.5" y="14" width="14" height="14" fill="#2a2a2a" stroke="#c8c8c8" stroke-width="1.3"/><path d="M11.5 17h14 M11.5 20.5h14 M11.5 24h14 M16 17v11 M20.8 17v11" stroke="#c8c8c8" stroke-width="1"/></svg>
<svg class="a" style="left:313px;top:266px;" width="28" height="30" viewBox="0 0 28 30"><path d="M1.5 1.5h12l7 7v4 M1.5 1.5v25h11.5 M13.5 1.5v7h7" fill="none" stroke="#c8c8c8" stroke-width="1.3"/><rect x="13.5" y="12.5" width="13" height="16" fill="#232226" stroke="#c8c8c8" stroke-width="1.3"/><path d="M16 16h8M16 19h8M16 22h8M16 25h8" stroke="#c8c8c8" stroke-width="1.1"/></svg>
<svg class="a" style="left:358px;top:266px;" width="28" height="30" viewBox="0 0 28 30"><path d="M1.5 1.5h12l7 7v5 M1.5 1.5v25h10 M13.5 1.5v7h7" fill="none" stroke="#c8c8c8" stroke-width="1.3"/><circle cx="19.5" cy="21.5" r="6.8" fill="#232226" stroke="#3d9ae0" stroke-width="1.4"/><ellipse cx="19.5" cy="21.5" rx="2.8" ry="6.8" fill="none" stroke="#3d9ae0" stroke-width="1.2"/><path d="M12.7 21.5h13.6 M14 18h11 M14 25h11" stroke="#3d9ae0" stroke-width="1.1"/></svg>
<svg class="a" style="left:408px;top:266px;" width="28" height="28" viewBox="0 0 28 28"><rect x="1.5" y="1.5" width="25" height="25" fill="none" stroke="#c8c8c8" stroke-width="1.3"/><path d="M1.5 7h25 M1.5 13.5h25 M1.5 20h25 M10 7v19.5 M18.5 7v19.5" stroke="#c8c8c8" stroke-width="1.1"/><path d="M3.5 3h4l-2 2.5z M12 3h4l-2 2.5z M20.5 3h4l-2 2.5z" fill="#3d9ae0"/></svg>
<svg class="a" style="left:464px;top:266px;" width="28" height="30" viewBox="0 0 28 30"><path d="M1.5 1.5h12l7 7v5 M1.5 1.5v25h10 M13.5 1.5v7h7" fill="none" stroke="#c8c8c8" stroke-width="1.3"/><circle cx="19.8" cy="21.6" r="6.2" fill="#232226" stroke="#3d9ae0" stroke-width="1.3"/><path d="M19 17.5v4.5h3" fill="none" stroke="#c8c8c8" stroke-width="1.2"/></svg>
<svg class="a" style="left:529px;top:266px;" width="28" height="30" viewBox="0 0 28 30"><path d="M1.5 1.5h12l7 7v3 M1.5 1.5v25h10 M13.5 1.5v7h7" fill="none" stroke="#c8c8c8" stroke-width="1.3"/><path d="M14 15c0-1.3 2.5-2 5.5-2s5.5.7 5.5 2v12c0 1.3-2.5 2-5.5 2s-5.5-.7-5.5-2z M14 15c0 1.3 2.5 2 5.5 2s5.5-.7 5.5-2" fill="#232226" stroke="#e3a445" stroke-width="1.3"/></svg>
<svg class="a" style="left:596px;top:266px;" width="28" height="30" viewBox="0 0 28 30"><path d="M1.5 25V1.5h12" fill="none" stroke="#c8c8c8" stroke-width="1.3"/><path d="M4.5 4.5h11l6 6v4 M4.5 4.5v23h9 M15.5 4.5v6h6" fill="none" stroke="#c8c8c8" stroke-width="1.3"/><path d="M13 20.5a6.5 6.5 0 0 1 12-3 M26 23a6.5 6.5 0 0 1-12 3" fill="none" stroke="#4cc06a" stroke-width="1.5"/><path d="M25.5 14v4h-4 M13.5 30v-4h4" fill="none" stroke="#4cc06a" stroke-width="1.4"/></svg>
<svg class="a" style="left:632px;top:267px;" width="16" height="13" viewBox="0 0 16 13"><rect x="0.7" y="0.7" width="14.6" height="11.6" fill="none" stroke="#c8c8c8" stroke-width="1.2"/><path d="M0.7 3h14.6" stroke="#c8c8c8"/><rect x="10.5" y="3.5" width="2" height="8" fill="#3d9ae0"/></svg>
<svg class="a" style="left:634px;top:290px;" width="12" height="15" viewBox="0 0 12 15"><rect x="0.7" y="0.7" width="10.6" height="13.6" fill="none" stroke="#6c6c6c" stroke-width="1.1"/><path d="M3 4h2M3 8h2M6.5 4h3M6.5 8h3" stroke="#6c6c6c" stroke-width="1.4"/></svg>
<svg class="a" style="left:634px;top:313px;" width="15" height="15" viewBox="0 0 15 15"><path d="M1 1h7l4 4v3 M1 1v13h3 M8 1v4h4" fill="none" stroke="#6c6c6c" stroke-width="1.1"/><ellipse cx="8" cy="11" rx="5" ry="2.5" fill="none" stroke="#6c6c6c"/><ellipse cx="9" cy="12" rx="3" ry="1.5" fill="none" stroke="#6c6c6c"/></svg>
<svg class="a" style="left:791px;top:272px;" width="16" height="17" viewBox="0 0 16 17"><text x="4.5" y="7.5" font-size="8.5" font-weight="700" font-family="Liberation Sans" fill="#3d9ae0" text-anchor="middle">A</text><text x="4.5" y="15.5" font-size="8.5" font-weight="700" font-family="Liberation Sans" fill="#c8c8c8" text-anchor="middle">Z</text><path d="M12.5 1v14 M9.5 12l3 3 3-3" fill="none" stroke="#c8c8c8" stroke-width="1.2"/></svg>
<svg class="a" style="left:791px;top:302px;" width="16" height="17" viewBox="0 0 16 17"><text x="4.5" y="7.5" font-size="8.5" font-weight="700" font-family="Liberation Sans" fill="#c8c8c8" text-anchor="middle">Z</text><text x="4.5" y="15.5" font-size="8.5" font-weight="700" font-family="Liberation Sans" fill="#3d9ae0" text-anchor="middle">A</text><path d="M12.5 1v14 M9.5 12l3 3 3-3" fill="none" stroke="#c8c8c8" stroke-width="1.2"/></svg>
<svg class="a" style="left:817px;top:266px;" width="28" height="28" viewBox="0 0 28 28"><rect x="1" y="1" width="26" height="26" fill="none" stroke="#c8c8c8" stroke-width="1.3"/><rect x="1" y="1" width="26" height="3.5" fill="#9a9a9a"/><path d="M14 4.5v22.5" stroke="#c8c8c8" stroke-width="1.2"/><text x="7.5" y="14" font-size="9" font-weight="700" font-family="Liberation Sans" fill="#c8c8c8" text-anchor="middle">Z</text><text x="7.5" y="24" font-size="9" font-weight="700" font-family="Liberation Sans" fill="#3d9ae0" text-anchor="middle">A</text><text x="20.5" y="14" font-size="9" font-weight="700" font-family="Liberation Sans" fill="#3d9ae0" text-anchor="middle">A</text><text x="20.5" y="24" font-size="9" font-weight="700" font-family="Liberation Sans" fill="#c8c8c8" text-anchor="middle">Z</text></svg>
<svg class="a" style="left:867px;top:266px;" width="28" height="28" viewBox="0 0 28 28"><path d="M1 1.5h25l-9.5 12v13h-6v-13z" fill="none" stroke="#c8c8c8" stroke-width="1.4"/></svg>
<svg class="a" style="left:905px;top:266px;" width="17" height="16" viewBox="0 0 17 16"><path d="M1 1h14l-5.5 6.5v7h-3v-7z" fill="none" stroke="#6c6c6c" stroke-width="1.1"/><path d="M10 10l5 5M15 10l-5 5" stroke="#6c6c6c"/></svg>
<svg class="a" style="left:905px;top:290px;" width="17" height="16" viewBox="0 0 17 16"><path d="M1 1h14l-5.5 6.5v7h-3v-7z" fill="none" stroke="#6c6c6c" stroke-width="1.1"/><circle cx="12" cy="11.5" r="3.3" fill="none" stroke="#6c6c6c"/></svg>
<svg class="a" style="left:905px;top:314px;" width="17" height="16" viewBox="0 0 17 16"><path d="M1 1h14l-5.5 6.5v7h-3v-7z" fill="none" stroke="#c8c8c8" stroke-width="1.1"/><circle cx="12" cy="11.5" r="3.3" fill="none" stroke="#3d9ae0" stroke-width="1.5"/></svg>
<svg class="a" style="left:1003px;top:266px;" width="32" height="29" viewBox="0 0 32 29"><path d="M5 3h10M5 7h10M5 11h10" stroke="#c8c8c8" stroke-width="1.4"/><path d="M4 14c-3 4-2 9 5 10 M7 21l3 3-3 3" fill="none" stroke="#3d9ae0" stroke-width="1.4"/><rect x="19" y="1" width="11" height="27" fill="none" stroke="#c8c8c8" stroke-width="1.3"/><path d="M19 10h11M19 19h11" stroke="#c8c8c8" stroke-width="1.2"/><path d="M23 5.5h3M23 14.5h3M23 23.5h3" stroke="#3d9ae0" stroke-width="1.2"/></svg>
<svg class="a" style="left:1048px;top:266px;" width="30" height="29" viewBox="0 0 30 29"><rect x="2" y="8" width="27" height="19" fill="none" stroke="#c8c8c8" stroke-width="1.3"/><path d="M2 14.5h27M2 21h27M11 8v19M20 8v19" stroke="#c8c8c8" stroke-width="1.1"/><rect x="11" y="8" width="9" height="6.5" fill="#3d9ae0"/><rect x="20" y="8" width="9" height="6.5" fill="#3d9ae0" opacity="0.8"/><path d="M10 0l-8 11h5l-3 9 9-12h-5l4-8z" fill="#f0b429"/></svg>
<svg class="a" style="left:1102px;top:266px;" width="28" height="30" viewBox="0 0 28 30"><rect x="1" y="1" width="19" height="8" fill="#3d9ae0"/><rect x="1" y="1" width="19" height="8" fill="none" stroke="#bcd6ee" stroke-width="0.8"/><rect x="1" y="16" width="17" height="9" fill="#3d9ae0"/><path d="M1 9v7 M20 9v7 M20 9h0" stroke="#c8c8c8" stroke-width="1.3"/><path d="M1 9h19" stroke="#c8c8c8"/><path d="M14 17l11 11M25 17l-11 11" stroke="#e8473c" stroke-width="1.5"/></svg>
<svg class="a" style="left:1160px;top:266px;" width="32" height="30" viewBox="0 0 32 30"><rect x="1" y="3" width="20" height="7" fill="none" stroke="#c8c8c8" stroke-width="1.3"/><rect x="1" y="15" width="17" height="7" fill="none" stroke="#c8c8c8" stroke-width="1.3"/><path d="M17 7l4 4 8-9" fill="none" stroke="#4cc06a" stroke-width="1.5"/><circle cx="22" cy="19" r="5" fill="#232226" stroke="#e8473c" stroke-width="1.4"/><path d="M18.5 15.5l7 7" stroke="#e8473c" stroke-width="1.4"/></svg>
<svg class="a" style="left:1224px;top:266px;" width="32" height="29" viewBox="0 0 32 29"><rect x="1" y="1" width="8" height="7" fill="none" stroke="#c8c8c8" stroke-width="1.2"/><rect x="1" y="11" width="8" height="7" fill="none" stroke="#c8c8c8" stroke-width="1.2"/><rect x="1" y="21" width="8" height="7" fill="none" stroke="#c8c8c8" stroke-width="1.2"/><path d="M9 14.5h9 M15 11.5l3 3-3 3" fill="none" stroke="#3d9ae0" stroke-width="1.3"/><rect x="20" y="11" width="10" height="7" fill="none" stroke="#3d9ae0" stroke-width="1.3"/><path d="M23 14.5h4" stroke="#3d9ae0" stroke-width="1.2"/></svg>
<svg class="a" style="left:1281px;top:266px;" width="28" height="28" viewBox="0 0 28 28"><path d="M14 1l12 5v16l-12 5-12-5V6z" fill="#5cb82e"/><path d="M14 1l12 5-12 5-12-5z" fill="#8fd35a"/><path d="M14 11v16" stroke="#2f7a1a"/><path d="M16 13l8-3v10l-8 3z" fill="none" stroke="#e6f5da" stroke-width="1"/><path d="M4 10l8 3v10l-8-3z M8 12v10 M4 15l8 3" fill="none" stroke="#e6f5da" stroke-width="1"/></svg>
<svg class="a" style="left:1346px;top:266px;" width="32" height="30" viewBox="0 0 32 30"><rect x="1" y="3" width="26" height="20" fill="none" stroke="#c8c8c8" stroke-width="1.2"/><path d="M1 9.5h26M1 16h26M10 3v20M18.5 3v20" stroke="#c8c8c8" stroke-width="1.1"/><rect x="1" y="3" width="9" height="6.5" fill="#3d9ae0"/><rect x="1" y="16" width="9" height="7" fill="#3d9ae0"/><path d="M20 17c0-3 2-5 4.5-5s4.5 2 4.5 4.5c0 3-4 3.5-4 6.5 M24.5 26v2.5" fill="none" stroke="#3d9ae0" stroke-width="1.5"/></svg>
<svg class="a" style="left:1397px;top:266px;" width="30" height="28" viewBox="0 0 30 28"><rect x="1" y="2" width="27" height="19" fill="none" stroke="#c8c8c8" stroke-width="1.2"/><path d="M1 8h27M1 14.5h27M9.5 2v23M19 2v19" stroke="#c8c8c8" stroke-width="1.1"/><path d="M1 21v4h9l3-4" fill="none" stroke="#c8c8c8" stroke-width="1.2"/><path d="M3 18l6-5 4 2" fill="none" stroke="#3d9ae0" stroke-width="1.4"/><path d="M13 15l6-5 3 1 5-6 M23 4.5h4v4" fill="none" stroke="#e8473c" stroke-width="1.4"/></svg>
<svg class="a" style="left:1456px;top:266px;" width="26" height="28" viewBox="0 0 26 28"><path d="M10 2h-5v24h5" fill="none" stroke="#c8c8c8" stroke-width="1.2"/><rect x="12" y="2" width="11" height="24" fill="none" stroke="#c8c8c8" stroke-width="1.3"/><path d="M12 8h11M12 14h11M12 20h11" stroke="#c8c8c8" stroke-width="1.1"/><rect x="0.8" y="10" width="9" height="9" fill="#232226" stroke="#c8c8c8" stroke-width="1.3"/><path d="M5.3 11.5v6M2.3 14.5h6" stroke="#3d9ae0" stroke-width="1.3"/></svg>
<svg class="a" style="left:1500px;top:266px;" width="26" height="28" viewBox="0 0 26 28"><path d="M10 2h-5v24h5" fill="none" stroke="#c8c8c8" stroke-width="1.2"/><rect x="12" y="2" width="11" height="24" fill="none" stroke="#c8c8c8" stroke-width="1.3"/><path d="M12 8h11M12 14h11M12 20h11" stroke="#c8c8c8" stroke-width="1.1"/><rect x="0.8" y="10" width="9" height="9" fill="#232226" stroke="#e8473c" stroke-width="1.3"/><path d="M2 17.5l7-6" stroke="#e8473c" stroke-width="1.3"/><rect x="0.8" y="10" width="9" height="9" fill="none" stroke="#e8473c" stroke-width="1.3"/></svg>
<svg class="a" style="left:1546px;top:266px;" width="30" height="28" viewBox="0 0 30 28"><path d="M10 2h-5v24" fill="none" stroke="#c8c8c8" stroke-width="1.2"/><rect x="10" y="2" width="18" height="24" fill="none" stroke="#c8c8c8" stroke-width="1.3"/><path d="M10 8h18M10 14h18M10 20h18M19 2v24" stroke="#c8c8c8" stroke-width="1.1"/><rect x="1" y="7" width="8" height="8" fill="#2a4f72" stroke="#c8c8c8" stroke-width="1.1"/><rect x="1" y="17" width="8" height="8" fill="#2a4f72" stroke="#c8c8c8" stroke-width="1.1"/><path d="M5 8.5v5M2.5 11h5M5 18.5v5M2.5 21h5" stroke="#8cc4f0" stroke-width="1.1"/></svg>
<svg class="a" style="left:1589px;top:268px;" width="15" height="12" viewBox="0 0 15 12"><path d="M5 2h9M7 5h7M7 8h7M5 11h9" stroke="#c8c8c8" stroke-width="1.2"/><path d="M0.5 5.5l3-2.5v5z" fill="#c8c8c8"/><path d="M1 5.5h4" stroke="#c8c8c8"/></svg>
<svg class="a" style="left:1589px;top:292px;" width="15" height="12" viewBox="0 0 15 12"><path d="M5 2h9M7 5h7M7 8h7M5 11h9" stroke="#c8c8c8" stroke-width="1.2"/><path d="M0.5 5.5h4" stroke="#c8c8c8" stroke-width="1.2"/></svg>
<div class="a" style="left:242px;top:383px;width:1435px;height:22px;background:#0b0b0b;"></div>
<svg class="a" style="left:243px;top:388px;" width="24" height="17" viewBox="0 0 24 17"><polygon points="21.5,3 21.5,15 9.5,15" fill="#6b6b6b"/></svg>
<div class="a" style="left:290px;top:388px;width:108px;height:17px;background:#616161;"></div>
<div class="a" style="left:398px;top:388px;width:108px;height:17px;background:#616161;"></div>
<div class="a" style="left:506px;top:388px;width:111px;height:17px;background:#616161;"></div>
<div class="a" style="left:617px;top:388px;width:85px;height:17px;background:#616161;"></div>
<div class="a" style="left:702px;top:388px;width:95px;height:17px;background:#616161;"></div>
<div class="t" style="left:-21.0px;width:600px;text-align:center;top:391.69px;font-size:11px;color:#e8e8e8;">A</div>
<div class="a" style="left:289.5px;top:390px;width:1px;height:15px;background:#3a3a3a;"></div>
<div class="t" style="left:44.0px;width:600px;text-align:center;top:391.69px;font-size:11px;color:#f0f0f0;">B</div>
<div class="a" style="left:397.5px;top:390px;width:1px;height:15px;background:#8a8a8a;"></div>
<div class="t" style="left:152.0px;width:600px;text-align:center;top:391.69px;font-size:11px;color:#f0f0f0;">C</div>
<div class="a" style="left:505.5px;top:390px;width:1px;height:15px;background:#8a8a8a;"></div>
<div class="t" style="left:261.5px;width:600px;text-align:center;top:391.69px;font-size:11px;color:#f0f0f0;">D</div>
<div class="a" style="left:616.5px;top:390px;width:1px;height:15px;background:#8a8a8a;"></div>
<div class="t" style="left:359.5px;width:600px;text-align:center;top:391.69px;font-size:11px;color:#f0f0f0;">E</div>
<div class="a" style="left:701.5px;top:390px;width:1px;height:15px;background:#8a8a8a;"></div>
<div class="t" style="left:449.5px;width:600px;text-align:center;top:391.69px;font-size:11px;color:#f0f0f0;">F</div>
<div class="a" style="left:796.5px;top:390px;width:1px;height:15px;background:#3a3a3a;"></div>
<div class="t" style="left:515.5px;width:600px;text-align:center;top:391.69px;font-size:11px;color:#e8e8e8;">G</div>
<div class="a" style="left:833.5px;top:390px;width:1px;height:15px;background:#3a3a3a;"></div>
<div class="t" style="left:563.165px;width:600px;text-align:center;top:391.69px;font-size:11px;color:#e8e8e8;">H</div>
<div class="a" style="left:891.83px;top:390px;width:1px;height:15px;background:#3a3a3a;"></div>
<div class="t" style="left:621.4950000000001px;width:600px;text-align:center;top:391.69px;font-size:11px;color:#e8e8e8;">I</div>
<div class="a" style="left:950.1600000000001px;top:390px;width:1px;height:15px;background:#3a3a3a;"></div>
<div class="t" style="left:679.825px;width:600px;text-align:center;top:391.69px;font-size:11px;color:#e8e8e8;">J</div>
<div class="a" style="left:1008.4900000000001px;top:390px;width:1px;height:15px;background:#3a3a3a;"></div>
<div class="t" style="left:738.1550000000002px;width:600px;text-align:center;top:391.69px;font-size:11px;color:#e8e8e8;">K</div>
<div class="a" style="left:1066.8200000000002px;top:390px;width:1px;height:15px;background:#3a3a3a;"></div>
<div class="t" style="left:796.4850000000001px;width:600px;text-align:center;top:391.69px;font-size:11px;color:#e8e8e8;">L</div>
<div class="a" style="left:1125.15px;top:390px;width:1px;height:15px;background:#3a3a3a;"></div>
<div class="t" style="left:854.815px;width:600px;text-align:center;top:391.69px;font-size:11px;color:#e8e8e8;">M</div>
<div class="a" style="left:1183.48px;top:390px;width:1px;height:15px;background:#3a3a3a;"></div>
<div class="t" style="left:913.145px;width:600px;text-align:center;top:391.69px;font-size:11px;color:#e8e8e8;">N</div>
<div class="a" style="left:1241.81px;top:390px;width:1px;height:15px;background:#3a3a3a;"></div>
<div class="t" style="left:971.4749999999999px;width:600px;text-align:center;top:391.69px;font-size:11px;color:#e8e8e8;">O</div>
<div class="a" style="left:1300.1399999999999px;top:390px;width:1px;height:15px;background:#3a3a3a;"></div>
<div class="t" style="left:1029.8049999999998px;width:600px;text-align:center;top:391.69px;font-size:11px;color:#e8e8e8;">P</div>
<div class="a" style="left:1358.4699999999998px;top:390px;width:1px;height:15px;background:#3a3a3a;"></div>
<div class="t" style="left:1088.1349999999998px;width:600px;text-align:center;top:391.69px;font-size:11px;color:#e8e8e8;">Q</div>
<div class="a" style="left:1416.7999999999997px;top:390px;width:1px;height:15px;background:#3a3a3a;"></div>
<div class="t" style="left:1146.4649999999997px;width:600px;text-align:center;top:391.69px;font-size:11px;color:#e8e8e8;">R</div>
<div class="a" style="left:1475.1299999999997px;top:390px;width:1px;height:15px;background:#3a3a3a;"></div>
<div class="t" style="left:1204.7949999999996px;width:600px;text-align:center;top:391.69px;font-size:11px;color:#e8e8e8;">S</div>
<div class="a" style="left:1533.4599999999996px;top:390px;width:1px;height:15px;background:#3a3a3a;"></div>
<div class="t" style="left:1263.1249999999995px;width:600px;text-align:center;top:391.69px;font-size:11px;color:#e8e8e8;">T</div>
<div class="a" style="left:1591.7899999999995px;top:390px;width:1px;height:15px;background:#3a3a3a;"></div>
<div class="t" style="left:1321.4549999999995px;width:600px;text-align:center;top:391.69px;font-size:11px;color:#e8e8e8;">U</div>
<div class="a" style="left:1650.1199999999994px;top:390px;width:1px;height:15px;background:#3a3a3a;"></div>
<div class="a" style="left:290px;top:403px;width:507px;height:2px;background:#2f9a4f;"></div>
<div class="a" style="left:242px;top:405px;width:25px;height:509px;background:#0d0d0d;"></div>
<div class="a" style="left:243px;top:464px;width:24px;height:22px;background:#616161;"></div>
<div class="a" style="left:243px;top:486px;width:24px;height:23px;background:#616161;"></div>
<div class="a" style="left:243px;top:509px;width:24px;height:22px;background:#616161;"></div>
<div class="a" style="left:243px;top:531px;width:24px;height:20px;background:#616161;"></div>
<div class="a" style="left:243px;top:551px;width:24px;height:22px;background:#616161;"></div>
<div class="a" style="left:243px;top:573px;width:24px;height:23px;background:#616161;"></div>
<div class="a" style="left:243px;top:596px;width:24px;height:22px;background:#616161;"></div>
<div class="a" style="left:243px;top:618px;width:24px;height:20px;background:#616161;"></div>
<div class="a" style="left:243px;top:638px;width:24px;height:19px;background:#616161;"></div>
<div class="a" style="left:243px;top:657px;width:24px;height:20px;background:#616161;"></div>
<div class="a" style="left:243px;top:677px;width:24px;height:20px;background:#616161;"></div>
<div class="t" style="left:-45px;width:600px;text-align:center;top:410.27px;font-size:11.5px;color:#f2f2f2;">1</div>
<div class="a" style="left:243px;top:423.5px;width:24px;height:1px;background:#3c3c3c;"></div>
<div class="t" style="left:-45px;width:600px;text-align:center;top:450.27px;font-size:11.5px;color:#f2f2f2;">2</div>
<div class="a" style="left:243px;top:463.5px;width:24px;height:1px;background:#3c3c3c;"></div>
<div class="t" style="left:-45px;width:600px;text-align:center;top:472.27px;font-size:11.5px;color:#f2f2f2;">3</div>
<div class="a" style="left:243px;top:485.5px;width:24px;height:1px;background:#8c8c8c;"></div>
<div class="t" style="left:-45px;width:600px;text-align:center;top:495.27px;font-size:11.5px;color:#f2f2f2;">4</div>
<div class="a" style="left:243px;top:508.5px;width:24px;height:1px;background:#8c8c8c;"></div>
<div class="t" style="left:-45px;width:600px;text-align:center;top:517.27px;font-size:11.5px;color:#f2f2f2;">5</div>
<div class="a" style="left:243px;top:530.5px;width:24px;height:1px;background:#8c8c8c;"></div>
<div class="t" style="left:-45px;width:600px;text-align:center;top:537.27px;font-size:11.5px;color:#f2f2f2;">6</div>
<div class="a" style="left:243px;top:550.5px;width:24px;height:1px;background:#8c8c8c;"></div>
<div class="t" style="left:-45px;width:600px;text-align:center;top:559.27px;font-size:11.5px;color:#f2f2f2;">7</div>
<div class="a" style="left:243px;top:572.5px;width:24px;height:1px;background:#8c8c8c;"></div>
<div class="t" style="left:-45px;width:600px;text-align:center;top:582.27px;font-size:11.5px;color:#f2f2f2;">8</div>
<div class="a" style="left:243px;top:595.5px;width:24px;height:1px;background:#8c8c8c;"></div>
<div class="t" style="left:-45px;width:600px;text-align:center;top:604.27px;font-size:11.5px;color:#f2f2f2;">9</div>
<div class="a" style="left:243px;top:617.5px;width:24px;height:1px;background:#8c8c8c;"></div>
<div class="t" style="left:-45px;width:600px;text-align:center;top:624.27px;font-size:11.5px;color:#f2f2f2;">10</div>
<div class="a" style="left:243px;top:637.5px;width:24px;height:1px;background:#8c8c8c;"></div>
<div class="t" style="left:-45px;width:600px;text-align:center;top:643.27px;font-size:11.5px;color:#f2f2f2;">11</div>
<div class="a" style="left:243px;top:656.5px;width:24px;height:1px;background:#8c8c8c;"></div>
<div class="t" style="left:-45px;width:600px;text-align:center;top:663.27px;font-size:11.5px;color:#f2f2f2;">12</div>
<div class="a" style="left:243px;top:676.5px;width:24px;height:1px;background:#8c8c8c;"></div>
<div class="t" style="left:-45px;width:600px;text-align:center;top:683.27px;font-size:11.5px;color:#f2f2f2;">13</div>
<div class="a" style="left:243px;top:696.5px;width:24px;height:1px;background:#3c3c3c;"></div>
<div class="t" style="left:-45px;width:600px;text-align:center;top:701.27px;font-size:11.5px;color:#f2f2f2;">14</div>
<div class="a" style="left:243px;top:714.5px;width:24px;height:1px;background:#3c3c3c;"></div>
<div class="t" style="left:-45px;width:600px;text-align:center;top:719.27px;font-size:11.5px;color:#f2f2f2;">15</div>
<div class="a" style="left:243px;top:732.5px;width:24px;height:1px;background:#3c3c3c;"></div>
<div class="t" style="left:-45px;width:600px;text-align:center;top:737.27px;font-size:11.5px;color:#f2f2f2;">16</div>
<div class="a" style="left:243px;top:750.5px;width:24px;height:1px;background:#3c3c3c;"></div>
<div class="t" style="left:-45px;width:600px;text-align:center;top:755.27px;font-size:11.5px;color:#f2f2f2;">17</div>
<div class="a" style="left:243px;top:768.5px;width:24px;height:1px;background:#3c3c3c;"></div>
<div class="t" style="left:-45px;width:600px;text-align:center;top:773.27px;font-size:11.5px;color:#f2f2f2;">18</div>
<div class="a" style="left:243px;top:786.5px;width:24px;height:1px;background:#3c3c3c;"></div>
<div class="t" style="left:-45px;width:600px;text-align:center;top:791.27px;font-size:11.5px;color:#f2f2f2;">19</div>
<div class="a" style="left:243px;top:804.5px;width:24px;height:1px;background:#3c3c3c;"></div>
<div class="t" style="left:-45px;width:600px;text-align:center;top:809.27px;font-size:11.5px;color:#f2f2f2;">20</div>
<div class="a" style="left:243px;top:822.5px;width:24px;height:1px;background:#3c3c3c;"></div>
<div class="t" style="left:-45px;width:600px;text-align:center;top:827.27px;font-size:11.5px;color:#f2f2f2;">21</div>
<div class="a" style="left:243px;top:840.5px;width:24px;height:1px;background:#3c3c3c;"></div>
<div class="t" style="left:-45px;width:600px;text-align:center;top:845.27px;font-size:11.5px;color:#f2f2f2;">22</div>
<div class="a" style="left:243px;top:858.5px;width:24px;height:1px;background:#3c3c3c;"></div>
<div class="t" style="left:-45px;width:600px;text-align:center;top:863.27px;font-size:11.5px;color:#f2f2f2;">23</div>
<div class="a" style="left:243px;top:876.5px;width:24px;height:1px;background:#3c3c3c;"></div>
<div class="t" style="left:-45px;width:600px;text-align:center;top:881.27px;font-size:11.5px;color:#f2f2f2;">24</div>
<div class="a" style="left:243px;top:894.5px;width:24px;height:1px;background:#3c3c3c;"></div>
<div class="t" style="left:-45px;width:600px;text-align:center;top:899.27px;font-size:11.5px;color:#f2f2f2;">25</div>
<div class="a" style="left:243px;top:912.5px;width:24px;height:1px;background:#3c3c3c;"></div>
<div class="a" style="left:266px;top:464px;width:1px;height:233px;background:#2f9a4f;"></div>
<div class="a" style="left:267px;top:405px;width:1391px;height:509px;background:#ffffff;"></div>
<div class="a" style="left:290px;top:424px;width:507px;height:40px;background:#038003;"></div>
<div class="a" style="left:398px;top:425px;width:1px;height:39px;background:#e6f2e6;"></div>
<div class="a" style="left:506px;top:425px;width:1px;height:39px;background:#e6f2e6;"></div>
<div class="a" style="left:617px;top:425px;width:1px;height:39px;background:#e6f2e6;"></div>
<div class="a" style="left:702px;top:425px;width:1px;height:39px;background:#e6f2e6;"></div>
<div class="t" style="left:44px;width:600px;text-align:center;top:437.57px;font-size:13.5px;color:#fff;font-weight:700;font-style:italic;letter-spacing:0.2px">Прізвище</div>
<div class="t" style="left:152px;width:600px;text-align:center;top:437.57px;font-size:13.5px;color:#fff;font-weight:700;font-style:italic;letter-spacing:0.2px">Ім'я</div>
<div class="t" style="left:261px;width:600px;text-align:center;top:428.07px;font-size:13.5px;color:#fff;font-weight:700;font-style:italic;letter-spacing:0.2px">Фехтування,</div>
<div class="t" style="left:261px;width:600px;text-align:center;top:447.07px;font-size:13.5px;color:#fff;font-weight:700;font-style:italic;letter-spacing:0.2px">бали</div>
<div class="t" style="left:359px;width:600px;text-align:center;top:437.57px;font-size:13.5px;color:#fff;font-weight:700;font-style:italic;letter-spacing:0.2px">Біг, час</div>
<div class="t" style="left:449px;width:600px;text-align:center;top:428.07px;font-size:13.5px;color:#fff;font-weight:700;font-style:italic;letter-spacing:0.2px">Стрибки,</div>
<div class="t" style="left:449px;width:600px;text-align:center;top:447.07px;font-size:13.5px;color:#fff;font-weight:700;font-style:italic;letter-spacing:0.2px">висота</div>
<div class="a" style="left:290px;top:464px;width:507px;height:233px;background:#cfced1;"></div>
<div class="a" style="left:617px;top:465px;width:85px;height:21px;background:#ffffff;"></div>
<div class="t" style="left:294px;top:469.23px;font-size:15.2px;color:#222222;letter-spacing:0.55px">Борсук</div>
<div class="t" style="left:401px;top:469.23px;font-size:15.2px;color:#222222;letter-spacing:0.55px">Максим</div>
<div class="t" style="right:1305px;top:468.98px;font-size:15.5px;color:#222222;letter-spacing:-0.2px">44</div>
<div class="t" style="right:1220px;top:468.98px;font-size:15.5px;color:#222222;letter-spacing:-0.6px">0:16:15</div>
<div class="t" style="right:1125px;top:468.98px;font-size:15.5px;color:#222222;letter-spacing:-0.2px">2,24</div>
<div class="a" style="left:291px;top:485px;width:506px;height:1px;background:#389a3e;"></div>
<div class="t" style="left:294px;top:492.23px;font-size:15.2px;color:#222222;letter-spacing:0.55px">Кришкевич</div>
<div class="t" style="left:401px;top:492.23px;font-size:15.2px;color:#222222;letter-spacing:0.55px">Сергій</div>
<div class="t" style="right:1305px;top:491.98px;font-size:15.5px;color:#222222;letter-spacing:-0.2px">44</div>
<div class="t" style="right:1220px;top:491.98px;font-size:15.5px;color:#222222;letter-spacing:-0.6px">0:15:55</div>
<div class="t" style="right:1125px;top:491.98px;font-size:15.5px;color:#222222;letter-spacing:-0.2px">2,17</div>
<div class="a" style="left:291px;top:508px;width:506px;height:1px;background:#389a3e;"></div>
<div class="t" style="left:294px;top:514.23px;font-size:15.2px;color:#222222;letter-spacing:0.55px">Томілевич</div>
<div class="t" style="left:401px;top:514.23px;font-size:15.2px;color:#222222;letter-spacing:0.55px">Андрій</div>
<div class="t" style="right:1305px;top:513.98px;font-size:15.5px;color:#222222;letter-spacing:-0.2px">44</div>
<div class="t" style="right:1220px;top:513.98px;font-size:15.5px;color:#222222;letter-spacing:-0.6px">0:16:15</div>
<div class="t" style="right:1125px;top:513.98px;font-size:15.5px;color:#222222;letter-spacing:-0.2px">2,22</div>
<div class="a" style="left:291px;top:530px;width:506px;height:1px;background:#389a3e;"></div>
<div class="t" style="left:294px;top:534.23px;font-size:15.2px;color:#222222;letter-spacing:0.55px">Струтнеко</div>
<div class="t" style="left:401px;top:534.23px;font-size:15.2px;color:#222222;letter-spacing:0.55px">Петро</div>
<div class="t" style="right:1305px;top:533.98px;font-size:15.5px;color:#222222;letter-spacing:-0.2px">42</div>
<div class="t" style="right:1220px;top:533.98px;font-size:15.5px;color:#222222;letter-spacing:-0.6px">0:15:17</div>
<div class="t" style="right:1125px;top:533.98px;font-size:15.5px;color:#222222;letter-spacing:-0.2px">2,12</div>
<div class="a" style="left:291px;top:550px;width:506px;height:1px;background:#389a3e;"></div>
<div class="t" style="left:294px;top:556.23px;font-size:15.2px;color:#222222;letter-spacing:0.55px">Тєрєхов</div>
<div class="t" style="left:401px;top:556.23px;font-size:15.2px;color:#222222;letter-spacing:0.55px">Сергій</div>
<div class="t" style="right:1305px;top:555.98px;font-size:15.5px;color:#222222;letter-spacing:-0.2px">42</div>
<div class="t" style="right:1220px;top:555.98px;font-size:15.5px;color:#222222;letter-spacing:-0.6px">0:15:23</div>
<div class="t" style="right:1125px;top:555.98px;font-size:15.5px;color:#222222;letter-spacing:-0.2px">2,25</div>
<div class="a" style="left:291px;top:572px;width:506px;height:1px;background:#389a3e;"></div>
<div class="t" style="left:294px;top:579.23px;font-size:15.2px;color:#222222;letter-spacing:0.55px">Борсук</div>
<div class="t" style="left:401px;top:579.23px;font-size:15.2px;color:#222222;letter-spacing:0.55px">Михайло</div>
<div class="t" style="right:1305px;top:578.98px;font-size:15.5px;color:#222222;letter-spacing:-0.2px">40</div>
<div class="t" style="right:1220px;top:578.98px;font-size:15.5px;color:#222222;letter-spacing:-0.6px">0:14:56</div>
<div class="t" style="right:1125px;top:578.98px;font-size:15.5px;color:#222222;letter-spacing:-0.2px">2,2</div>
<div class="a" style="left:291px;top:595px;width:506px;height:1px;background:#389a3e;"></div>
<div class="t" style="left:294px;top:601.23px;font-size:15.2px;color:#222222;letter-spacing:0.55px">Іванов</div>
<div class="t" style="left:401px;top:601.23px;font-size:15.2px;color:#222222;letter-spacing:0.55px">Петро</div>
<div class="t" style="right:1305px;top:600.98px;font-size:15.5px;color:#222222;letter-spacing:-0.2px">40</div>
<div class="t" style="right:1220px;top:600.98px;font-size:15.5px;color:#222222;letter-spacing:-0.6px">0:13:55</div>
<div class="t" style="right:1125px;top:600.98px;font-size:15.5px;color:#222222;letter-spacing:-0.2px">2,22</div>
<div class="a" style="left:291px;top:617px;width:506px;height:1px;background:#389a3e;"></div>
<div class="t" style="left:294px;top:621.23px;font-size:15.2px;color:#222222;letter-spacing:0.55px">Іванов</div>
<div class="t" style="left:401px;top:621.23px;font-size:15.2px;color:#222222;letter-spacing:0.55px">Іван</div>
<div class="t" style="right:1305px;top:620.98px;font-size:15.5px;color:#222222;letter-spacing:-0.2px">39</div>
<div class="t" style="right:1220px;top:620.98px;font-size:15.5px;color:#222222;letter-spacing:-0.6px">0:14:17</div>
<div class="t" style="right:1125px;top:620.98px;font-size:15.5px;color:#222222;letter-spacing:-0.2px">2,22</div>
<div class="a" style="left:291px;top:637px;width:506px;height:1px;background:#389a3e;"></div>
<div class="t" style="left:294px;top:640.23px;font-size:15.2px;color:#222222;letter-spacing:0.55px">Амбарін</div>
<div class="t" style="left:401px;top:640.23px;font-size:15.2px;color:#222222;letter-spacing:0.55px">Ігор</div>
<div class="t" style="right:1305px;top:639.98px;font-size:15.5px;color:#222222;letter-spacing:-0.2px">38</div>
<div class="t" style="right:1220px;top:639.98px;font-size:15.5px;color:#222222;letter-spacing:-0.6px">0:16:15</div>
<div class="t" style="right:1125px;top:639.98px;font-size:15.5px;color:#222222;letter-spacing:-0.2px">2,22</div>
<div class="a" style="left:291px;top:656px;width:506px;height:1px;background:#389a3e;"></div>
<div class="t" style="left:294px;top:660.23px;font-size:15.2px;color:#222222;letter-spacing:0.55px">Амбарін</div>
<div class="t" style="left:401px;top:660.23px;font-size:15.2px;color:#222222;letter-spacing:0.55px">Тігран</div>
<div class="t" style="right:1305px;top:659.98px;font-size:15.5px;color:#222222;letter-spacing:-0.2px">38</div>
<div class="t" style="right:1220px;top:659.98px;font-size:15.5px;color:#222222;letter-spacing:-0.6px">0:17:00</div>
<div class="t" style="right:1125px;top:659.98px;font-size:15.5px;color:#222222;letter-spacing:-0.2px">2,22</div>
<div class="a" style="left:291px;top:676px;width:506px;height:1px;background:#389a3e;"></div>
<div class="t" style="left:294px;top:680.23px;font-size:15.2px;color:#222222;letter-spacing:0.55px">Турсунов</div>
<div class="t" style="left:401px;top:680.23px;font-size:15.2px;color:#222222;letter-spacing:0.55px">Тімур</div>
<div class="t" style="right:1305px;top:679.98px;font-size:15.5px;color:#222222;letter-spacing:-0.2px">38</div>
<div class="t" style="right:1220px;top:679.98px;font-size:15.5px;color:#222222;letter-spacing:-0.6px">0:17:00</div>
<div class="t" style="right:1125px;top:679.98px;font-size:15.5px;color:#222222;letter-spacing:-0.2px">2,22</div>
<div class="a" style="left:290px;top:696px;width:507px;height:1.3px;background:#389a3e;"></div>
<div class="a" style="left:290px;top:464px;width:507px;height:1px;background:#e8dfe8;"></div>
<div class="a" style="left:290px;top:464px;width:1.2px;height:233px;background:#2e8f36;"></div>
<div class="a" style="left:398px;top:464px;width:1.2px;height:233px;background:#2e8f36;"></div>
<div class="a" style="left:506px;top:464px;width:1.2px;height:233px;background:#2e8f36;"></div>
<div class="a" style="left:617px;top:464px;width:1.2px;height:233px;background:#2e8f36;"></div>
<div class="a" style="left:702px;top:464px;width:1.2px;height:233px;background:#2e8f36;"></div>
<div class="a" style="left:796px;top:464px;width:1.2px;height:233px;background:#2e8f36;"></div>
<div class="t" style="left:836px;top:470.15px;font-size:14px;color:#ff4a4a;font-style:italic;font-weight:700;letter-spacing:0.45px">Завдання:</div>
<div class="t" style="left:855px;top:491.98px;font-size:14.2px;color:#138a1c;font-style:italic;letter-spacing:0.68px"><b>1.</b>&nbsp; Впорядкувати дані в таблиці&nbsp; <b>за спаданням</b> , сортувати</div>
<div class="t" style="left:855px;top:513.98px;font-size:14.2px;color:#138a1c;font-style:italic;letter-spacing:0.68px">за стовпцем&nbsp; <b>Фехтування, бали.</b></div>
<div class="t" style="left:855px;top:555.98px;font-size:14.2px;color:#138a1c;font-style:italic;letter-spacing:0.68px"><b>2.</b>&nbsp; Виділити&nbsp; <b>найменший Час</b>&nbsp; що встановив учасник змагань.</div>
<div class="t" style="left:855px;top:578.98px;font-size:14.2px;color:#138a1c;font-style:italic;letter-spacing:0.68px">Колір клітинки:&nbsp; <b>зелений;</b></div>
<div class="t" style="left:855px;top:600.98px;font-size:14.2px;color:#138a1c;font-style:italic;letter-spacing:0.68px">Текст:&nbsp; <b>білий напівжирний</b></div>
<div class="a" style="left:1658px;top:388px;width:19px;height:526px;background:#0b0b0b;"></div>
<svg class="a" style="left:1661px;top:390px;" width="14" height="12" viewBox="0 0 14 12"><polygon points="7,2 12,9 2,9" fill="#9a9a9a"/></svg>
<div class="a" style="left:1663px;top:403px;width:9px;height:483px;background:#9b9b9b;border-radius:5px"></div>
<svg class="a" style="left:1661px;top:902px;" width="14" height="12" viewBox="0 0 14 12"><polygon points="7,10 12,3 2,3" fill="#9a9a9a"/></svg>
<div class="a" style="left:784px;top:611px;width:552px;height:255px;background:rgba(0,0,0,0.12);filter:blur(3px)"></div>
<div class="a" style="left:785.5px;top:611.5px;width:548px;height:251px;background:#f0eff2;border:1px solid #8c8c8c"></div>
<div class="a" style="left:786px;top:612px;width:547px;height:28px;background:#4b4747;"></div>
<div class="t" style="left:793px;top:620.91px;font-size:10.5px;color:#f0f0f0;letter-spacing:-0.1px;">Sort</div>
<div class="t" style="left:967.5px;width:600px;text-align:center;top:620.69px;font-size:11px;color:#e0e0e0;">?</div>
<svg class="a" style="left:1304px;top:619px;" width="13" height="13" viewBox="0 0 13 13"><path d="M1.5 1.5l10 10M11.5 1.5l-10 10" stroke="#f0f0f0" stroke-width="1.2"/></svg>
<div class="a" style="left:792.5px;top:647px;width:75.0px;height:22.5px;background:#e1e1e1;border:1px solid #adadad"></div>
<svg class="a" style="left:799px;top:651px;" width="15" height="15" viewBox="0 0 15 15"><path d="M7.5 1v13M1 7.5h13" stroke="#3cb04a" stroke-width="1.3"/></svg>
<div class="t" style="left:817.2px;top:653.87px;font-size:9.6px;color:#1e1e1e;letter-spacing:-0.1px;"><u>A</u>dd Level</div>
<div class="a" style="left:870.5px;top:647px;width:85.0px;height:22.5px;background:#e1e1e1;border:1px solid #adadad"></div>
<svg class="a" style="left:879px;top:651px;" width="13" height="14" viewBox="0 0 13 14"><path d="M1.5 1.5l10 11M11.5 1.5l-10 11" stroke="#e8384a" stroke-width="1.3"/></svg>
<div class="t" style="left:895.5px;top:653.87px;font-size:9.6px;color:#1e1e1e;letter-spacing:-0.1px;"><u>D</u>elete Level</div>
<div class="a" style="left:959px;top:647px;width:79.5px;height:22.5px;background:#e1e1e1;border:1px solid #adadad"></div>
<svg class="a" style="left:965px;top:650px;" width="18" height="17" viewBox="0 0 18 17"><path d="M1.5 13.5V1.5h6l2 2" fill="none" stroke="#3a3a3a" stroke-width="1"/><path d="M6.5 4.5h6l3 3v9h-9z M12.5 4.5v3h3 M8.5 10h5M8.5 12.5h5" fill="#f4f4f4" stroke="#3a3a3a" stroke-width="1"/></svg>
<div class="t" style="left:983.5px;top:653.87px;font-size:9.6px;color:#1e1e1e;letter-spacing:-0.1px;"><u>C</u>opy Level</div>
<div class="a" style="left:1040px;top:647px;width:1.6px;height:23px;background:#1e1e1e;"></div>
<div class="a" style="left:1043.3px;top:647px;width:21.90000000000009px;height:22.5px;background:#e6e6e6;border:1px solid #c4c4c4"></div>
<svg class="a" style="left:1048px;top:653px;" width="12" height="9" viewBox="0 0 12 9"><path d="M1 7l5-5 5 5" fill="none" stroke="#b4b4b4" stroke-width="1.1"/></svg>
<div class="a" style="left:1068.7px;top:647px;width:21.899999999999864px;height:22.5px;background:#e6e6e6;border:1px solid #c4c4c4"></div>
<svg class="a" style="left:1074px;top:654px;" width="12" height="9" viewBox="0 0 12 9"><path d="M1 2l5 5 5-5" fill="none" stroke="#b4b4b4" stroke-width="1.1"/></svg>
<div class="a" style="left:1094.4px;top:647px;width:56.799999999999955px;height:22.5px;background:#e1e1e1;border:1px solid #adadad"></div>
<div class="t" style="left:1102px;top:653.87px;font-size:9.6px;color:#1e1e1e;letter-spacing:-0.1px;"><u>O</u>ptions...</div>
<div class="a" style="left:1216px;top:652.5px;width:12px;height:12px;background:#ffffff;border:1px solid #333"></div>
<svg class="a" style="left:1217px;top:653px;" width="10" height="10" viewBox="0 0 10 10"><path d="M1.5 5l2.5 2.5 4.5-5.5" fill="none" stroke="#222" stroke-width="1.1"/></svg>
<div class="t" style="left:1233.5px;top:653.87px;font-size:9.6px;color:#1e1e1e;letter-spacing:-0.1px;">My data has <u>h</u>eaders</div>
<div class="a" style="left:791px;top:673.5px;width:537px;height:156.5px;background:#ffffff;border:1px solid #a9a9a9"></div>
<div class="a" style="left:973px;top:675px;width:1px;height:19px;background:#ececec;"></div>
<div class="a" style="left:1153px;top:675px;width:1px;height:19px;background:#ececec;"></div>
<div class="t" style="left:797px;top:680.07px;font-size:9.6px;color:#1e1e1e;letter-spacing:-0.1px;">Column</div>
<div class="t" style="left:977.6px;top:680.07px;font-size:9.6px;color:#1e1e1e;letter-spacing:-0.1px;">Sort On</div>
<div class="t" style="left:1158.2px;top:680.07px;font-size:9.6px;color:#1e1e1e;letter-spacing:-0.1px;">Order</div>
<div class="a" style="left:792px;top:694.3px;width:535px;height:20.2px;background:#e3e2e6;"></div>
<div class="t" style="left:794.6px;top:697.57px;font-size:9.6px;color:#1e1e1e;letter-spacing:-0.1px;">Sort by</div>
<div class="a" style="left:837.6px;top:695.4px;width:126.89999999999998px;height:18.3px;background:#ffffff;border:1px solid #b4b4b4"></div>
<div class="a" style="left:947.5px;top:696.5px;width:16px;height:16px;background:#e9e9e9;border-left:1px solid #d6d6d6"></div>
<svg class="a" style="left:950.5px;top:701px;" width="11" height="7" viewBox="0 0 11 7"><path d="M1 1l4.5 4.5L10 1" fill="none" stroke="#606060" stroke-width="1"/></svg>
<div class="t" style="left:841.1px;top:699.87px;font-size:9.6px;color:#1e1e1e;letter-spacing:-0.1px;">Фехтування, бали</div>
<div class="a" style="left:974.7px;top:695.4px;width:170.70000000000005px;height:18.3px;background:#ffffff;border:1px solid #b4b4b4"></div>
<div class="a" style="left:1128.4px;top:696.5px;width:16px;height:16px;background:#e9e9e9;border-left:1px solid #d6d6d6"></div>
<svg class="a" style="left:1131.4px;top:701px;" width="11" height="7" viewBox="0 0 11 7"><path d="M1 1l4.5 4.5L10 1" fill="none" stroke="#606060" stroke-width="1"/></svg>
<div class="t" style="left:978.2px;top:699.87px;font-size:9.6px;color:#1e1e1e;letter-spacing:-0.1px;">Cell Values</div>
<div class="a" style="left:1155.3px;top:695.4px;width:170.0px;height:18.3px;background:#ffffff;border:1px solid #b4b4b4"></div>
<div class="a" style="left:1308.3px;top:696.5px;width:16px;height:16px;background:#e9e9e9;border-left:1px solid #d6d6d6"></div>
<svg class="a" style="left:1311.3px;top:701px;" width="11" height="7" viewBox="0 0 11 7"><path d="M1 1l4.5 4.5L10 1" fill="none" stroke="#606060" stroke-width="1"/></svg>
<div class="t" style="left:1158.8px;top:699.87px;font-size:9.6px;color:#1e1e1e;letter-spacing:-0.1px;">Largest to Smallest</div>
<div class="a" style="left:1189.2px;top:834px;width:63.2px;height:19.8px;background:#e1e1e1;border:2px solid #0078d7"></div>
<div class="t" style="left:921px;width:600px;text-align:center;top:839.13px;font-size:10px;color:#1e1e1e;">OK</div>
<div class="a" style="left:1263.2px;top:834px;width:63px;height:19.8px;background:#e1e1e1;border:1px solid #adadad"></div>
<div class="t" style="left:995px;width:600px;text-align:center;top:839.13px;font-size:10px;color:#1e1e1e;">Cancel</div>
<svg class="a" style="left:1322px;top:851px;" width="10" height="10" viewBox="0 0 10 10"><g fill="#b8b8b8"><rect x="7" y="1" width="1.5" height="1.5"/><rect x="4" y="4" width="1.5" height="1.5"/><rect x="7" y="4" width="1.5" height="1.5"/><rect x="1" y="7" width="1.5" height="1.5"/><rect x="4" y="7" width="1.5" height="1.5"/><rect x="7" y="7" width="1.5" height="1.5"/></g></svg>
<svg class="a" style="left:731px;top:752px;" width="12" height="17" viewBox="0 0 12 17"><path d="M1.5 1.2v12.3l3-2.7 2 4.3 1.8-.8-1.9-4.2H10z" fill="#fff" stroke="#1a1a1a" stroke-width="0.95" stroke-linejoin="round"/></svg>
<div class="a" style="left:0px;top:956px;width:1920px;height:73px;background:#000000;"></div>
<div class="a" style="left:0px;top:1029px;width:1920px;height:1px;background:#d6d6d6;"></div>
<svg class="a" style="left:56px;top:968px;" width="22" height="32" viewBox="0 0 22 32"><rect x="5.5" y="1" width="11" height="19" rx="5.5" fill="none" stroke="#f4f4f4" stroke-width="1.6"/><path d="M1 14.5c0 5.5 4.5 9.5 10 9.5s10-4 10-9.5 M11 24v6 M6 30h10" fill="none" stroke="#f4f4f4" stroke-width="1.6"/></svg>
<div class="t" style="left:-234px;width:600px;text-align:center;top:1006.39px;font-size:14.9px;color:#f4f4f4;font-weight:700;letter-spacing:-0.35px">Звук</div>
<svg class="a" style="left:99px;top:980px;" width="12" height="8" viewBox="0 0 12 8"><path d="M1.5 6.5L6 2l4.5 4.5" fill="none" stroke="#f0f0f0" stroke-width="1.7"/></svg>
<svg class="a" style="left:166px;top:973px;" width="32" height="22" viewBox="0 0 32 22"><rect x="1" y="1" width="20" height="19" rx="4" fill="none" stroke="#f4f4f4" stroke-width="1.6"/><path d="M21 8l9-6v17l-9-6" fill="none" stroke="#f4f4f4" stroke-width="1.6" stroke-linejoin="round"/></svg>
<div class="t" style="left:-118px;width:600px;text-align:center;top:1006.39px;font-size:14.9px;color:#f4f4f4;font-weight:700;letter-spacing:-0.35px">Видео</div>
<svg class="a" style="left:222px;top:980px;" width="12" height="8" viewBox="0 0 12 8"><path d="M1.5 6.5L6 2l4.5 4.5" fill="none" stroke="#f0f0f0" stroke-width="1.7"/></svg>
<svg class="a" style="left:412px;top:969px;" width="26" height="27" viewBox="0 0 26 27"><circle cx="8" cy="6" r="4.5" fill="none" stroke="#f4f4f4" stroke-width="1.6"/><path d="M1 25v-4c0-4 3-7 7-7h2" fill="none" stroke="#f4f4f4" stroke-width="1.6"/><circle cx="17" cy="12.5" r="4" fill="none" stroke="#f4f4f4" stroke-width="1.6"/><path d="M9.5 25.5v-2c0-3 2.5-5.5 5.5-5.5h4c3 0 5.5 2.5 5.5 5.5v2z" fill="none" stroke="#f4f4f4" stroke-width="1.6" stroke-linejoin="round"/></svg>
<div class="t" style="left:446px;top:975.30px;font-size:15px;color:#d0d0d0;">26</div>
<div class="t" style="left:125px;width:600px;text-align:center;top:1006.39px;font-size:14.9px;color:#f4f4f4;font-weight:700;letter-spacing:-0.35px">Участники</div>
<svg class="a" style="left:485px;top:980px;" width="12" height="8" viewBox="0 0 12 8"><path d="M1.5 6.5L6 2l4.5 4.5" fill="none" stroke="#f0f0f0" stroke-width="1.7"/></svg>
<svg class="a" style="left:548px;top:968px;" width="30" height="30" viewBox="0 0 30 30"><path d="M9 5.5V3.5C9 2 10 1 11.5 1h14C27 1 28 2 28 3.5v10c0 1.5-1 2.5-2.5 2.5H24" fill="none" stroke="#f4f4f4" stroke-width="1.6"/><path d="M3.5 7h17C22 7 23 8 23 9.5v11c0 1.5-1 2.5-2.5 2.5H10l-5 5v-5H3.5C2 23 1 22 1 20.5v-11C1 8 2 7 3.5 7z" fill="none" stroke="#f4f4f4" stroke-width="1.6" stroke-linejoin="round"/><circle cx="7" cy="15" r="1.4" fill="#f4f4f4"/><circle cx="12" cy="15" r="1.4" fill="#f4f4f4"/><circle cx="17" cy="15" r="1.4" fill="#f4f4f4"/></svg>
<div class="t" style="left:263px;width:600px;text-align:center;top:1006.39px;font-size:14.9px;color:#f4f4f4;font-weight:700;letter-spacing:-0.35px">Чат</div>
<svg class="a" style="left:598px;top:980px;" width="12" height="8" viewBox="0 0 12 8"><path d="M1.5 6.5L6 2l4.5 4.5" fill="none" stroke="#f0f0f0" stroke-width="1.7"/></svg>
<svg class="a" style="left:666px;top:969px;" width="31" height="28" viewBox="0 0 31 28"><path d="M15.5 26C8 20.5 1.5 15.5 1.5 9 1.5 4.5 5 1.5 9 1.5c3 0 5 1.5 6.5 4 1.5-2.5 3.5-4 6.5-4 4 0 7.5 3 7.5 7.5 0 6.5-6.5 11.5-14 17z" fill="none" stroke="#f4f4f4" stroke-width="1.6"/></svg>
<div class="t" style="left:382px;width:600px;text-align:center;top:1006.39px;font-size:14.9px;color:#f4f4f4;font-weight:700;letter-spacing:-0.35px">Отреагировать</div>
<svg class="a" style="left:723px;top:980px;" width="12" height="8" viewBox="0 0 12 8"><path d="M1.5 6.5L6 2l4.5 4.5" fill="none" stroke="#f0f0f0" stroke-width="1.7"/></svg>
<div class="a" style="left:791px;top:972px;width:30px;height:24px;background:#12e58f;border-radius:3px"></div>
<svg class="a" style="left:798px;top:975px;" width="16" height="17" viewBox="0 0 16 17"><path d="M8 15V4 M3 8.5L8 3.5l5 5" fill="none" stroke="#000" stroke-width="2.6" stroke-linejoin="miter"/></svg>
<div class="t" style="left:506px;width:600px;text-align:center;top:1006.39px;font-size:14.9px;color:#f4f4f4;font-weight:700;letter-spacing:-0.35px">Поделиться</div>
<svg class="a" style="left:845px;top:980px;" width="12" height="8" viewBox="0 0 12 8"><path d="M1.5 6.5L6 2l4.5 4.5" fill="none" stroke="#f0f0f0" stroke-width="1.7"/></svg>
<svg class="a" style="left:964px;top:971px;" width="24" height="27" viewBox="0 0 24 27"><path d="M12 1.5l10 3.5v8c0 6-4.5 10.5-10 12.5C6.5 23.5 2 19 2 13V5z" fill="none" stroke="#f4f4f4" stroke-width="1.7"/><path d="M12 5v8H5.5V6.8z M12 13h6.5c-.3 4.5-3 7.7-6.5 9.3z" fill="#f4f4f4"/></svg>
<div class="t" style="left:676.5px;width:600px;text-align:center;top:1006.39px;font-size:14.9px;color:#f4f4f4;font-weight:700;letter-spacing:-0.35px">Инструменты организатора</div>
<svg class="a" style="left:1184px;top:968px;" width="32" height="32" viewBox="0 0 32 32"><circle cx="16" cy="16" r="14.5" fill="none" stroke="#f4f4f4" stroke-width="1.7"/><circle cx="16" cy="9" r="1.8" fill="#f4f4f4"/><path d="M12.5 13h4v9 M12 22.5h8" fill="none" stroke="#f4f4f4" stroke-width="2"/></svg>
<div class="t" style="left:900px;width:600px;text-align:center;top:1006.39px;font-size:14.9px;color:#f4f4f4;font-weight:700;letter-spacing:-0.35px">Информация о конференции</div>
<svg class="a" style="left:1357px;top:970px;" width="28" height="28" viewBox="0 0 28 28"><path d="M2 11V7C2 4 4 2 7 2h4 M25 16v4c0 3-2 5-5 5h-4" fill="none" stroke="#f4f4f4" stroke-width="1.8"/><circle cx="20" cy="7" r="4.3" fill="none" stroke="#f4f4f4" stroke-width="1.8"/><circle cx="7" cy="20" r="4.3" fill="none" stroke="#f4f4f4" stroke-width="1.8"/></svg>
<div class="t" style="left:1071px;width:600px;text-align:center;top:1006.39px;font-size:14.9px;color:#f4f4f4;font-weight:700;letter-spacing:-0.35px">Приложения</div>
<svg class="a" style="left:1405px;top:980px;" width="12" height="8" viewBox="0 0 12 8"><path d="M1.5 6.5L6 2l4.5 4.5" fill="none" stroke="#f0f0f0" stroke-width="1.7"/></svg>
<svg class="a" style="left:1484px;top:968px;" width="30" height="31" viewBox="0 0 30 31"><rect x="0.5" y="0.5" width="13.5" height="13.5" rx="2" fill="#f4f4f4"/><rect x="16" y="0.5" width="13.5" height="13.5" rx="2" fill="#f4f4f4"/><rect x="0.5" y="16.5" width="13.5" height="13.5" rx="2" fill="#f4f4f4"/><rect x="16" y="16.5" width="13.5" height="13.5" rx="2" fill="#f4f4f4"/></svg>
<div class="t" style="left:1199px;width:600px;text-align:center;top:1006.39px;font-size:14.9px;color:#f4f4f4;font-weight:700;letter-spacing:-0.35px">Сессионные залы</div>
<svg class="a" style="left:1620px;top:968px;" width="32" height="32" viewBox="0 0 32 32"><circle cx="16" cy="16" r="14.5" fill="none" stroke="#f4f4f4" stroke-width="1.7"/><circle cx="10" cy="16" r="1.7" fill="#f4f4f4"/><circle cx="16" cy="16" r="1.7" fill="#f4f4f4"/><circle cx="22" cy="16" r="1.7" fill="#f4f4f4"/></svg>
<div class="t" style="left:1336px;width:600px;text-align:center;top:1006.39px;font-size:14.9px;color:#f4f4f4;font-weight:700;letter-spacing:-0.35px">Дополнительно</div>
<svg class="a" style="left:1839px;top:969px;" width="32" height="31" viewBox="0 0 32 31"><path d="M9 2h14l7.5 13.5L23 29H9L1.5 15.5z" fill="none" stroke="#e8245a" stroke-width="2.2" stroke-linejoin="round"/><path d="M11.5 10l9 11M20.5 10l-9 11" stroke="#fff" stroke-width="3.2"/></svg>
<div class="t" style="left:1556px;width:600px;text-align:center;top:1006.39px;font-size:14.9px;color:#f4f4f4;font-weight:700;letter-spacing:-0.35px">Завершение</div>
<div class="a" style="left:0px;top:1030px;width:1920px;height:50px;background:#3d3d3d;"></div>
<div class="a" style="left:11px;top:1033px;width:44px;height:44px;border-radius:50%;background:radial-gradient(circle at 50% 95%,#3ee6ff 0%,#1a9ad8 25%,#0c5a9c 55%,#0a3a70 75%,#123c6a 100%);box-shadow:0 0 0 1.3px #b8c4cc"></div>
<div class="a" style="left:15px;top:1036px;width:36px;height:19px;border-radius:50% 50% 40% 40%/100% 100% 30% 30%;background:linear-gradient(180deg,rgba(255,255,255,0.75),rgba(200,220,240,0.25))"></div>
<svg class="a" style="left:19px;top:1040px;" width="32" height="29" viewBox="0 0 32 29"><path d="M5.5 4.5c3-2.5 6.5-2.5 9.5-.5l-2 9c-3-2-6.5-2-9.5.5z" fill="#f25a1f"/><path d="M16 4c3 2 6.5 2.2 10 .2l-2.2 9.2c-3.4 2-6.8 1.8-10 -.2z" fill="#7cc22a"/><path d="M3.2 15c3-2.5 6.5-2.5 9.5-.5l-2 9c-3-2-6.5-2-9.5.5z" fill="#1a9be8"/><path d="M13.7 14.5c3 2 6.5 2.2 10 .2l-2.2 9.2c-3.4 2-6.8 1.8-10-.2z" fill="#ffbe1a"/></svg>
<svg class="a" style="left:88px;top:1036px;" width="40" height="40" viewBox="0 0 40 40"><path d="M4 22c0-9 8-14 17-14 8 0 12 4 12 9 0 6-5 12-13 14-4 1-6-1-8-3-2 2-4 3-6 1-2-2-2-4-2-7z" fill="#bcdcf0" stroke="#8ab8d8" stroke-width="0.8"/><circle cx="19" cy="22" r="1.8" fill="#3d3d3d"/><path d="M10 18l3-2 2 3-3 2z" fill="#e83a2a"/><path d="M15 12l3-1.5 1.8 2.5-2.8 2z" fill="#40b830"/><path d="M22 8.5l3-1 1.5 3-3 1.5z" fill="#f8b020"/><path d="M33 8L22 36" stroke="#e8902a" stroke-width="2.6" stroke-linecap="round"/><path d="M31 8l4-7 4 5-5 3z" fill="#d8b080"/></svg>
<svg class="a" style="left:164px;top:1037px;" width="38" height="38" viewBox="0 0 38 38"><ellipse cx="18" cy="15" rx="16" ry="10" fill="#f4f4f4" stroke="#e03030" stroke-width="2" transform="rotate(-15 18 15)"/><ellipse cx="16" cy="21" rx="14" ry="5" fill="#9a9a9a" opacity="0.8"/><path d="M12 6l14 24M26 6L16 26" stroke="#707070" stroke-width="2"/><circle cx="28" cy="31" r="4" fill="none" stroke="#2a8ae0" stroke-width="2.5"/><circle cx="19" cy="33" r="4" fill="none" stroke="#2a8ae0" stroke-width="2.5"/></svg>
<svg class="a" style="left:245px;top:1035px;" width="29" height="39" viewBox="0 0 29 39"><rect x="0.5" y="0.5" width="28" height="38" rx="2" fill="#a8d0ec" stroke="#6a9ac0"/><rect x="3" y="3" width="23" height="12" fill="#e0f0fa" stroke="#80a8c8" stroke-width="0.7"/><rect x="3" y="4" width="23" height="2" fill="#f0a040"/><g fill="#f4f8fc"><rect x="3" y="19.0" width="2.8" height="2.8"/><rect x="3" y="23.3" width="2.8" height="2.8"/><rect x="3" y="27.6" width="2.8" height="2.8"/><rect x="3" y="31.9" width="2.8" height="2.8"/><rect x="7" y="19.0" width="2.8" height="2.8"/><rect x="7" y="23.3" width="2.8" height="2.8"/><rect x="7" y="27.6" width="2.8" height="2.8"/><rect x="7" y="31.9" width="2.8" height="2.8"/><rect x="11" y="19.0" width="2.8" height="2.8"/><rect x="11" y="23.3" width="2.8" height="2.8"/><rect x="11" y="27.6" width="2.8" height="2.8"/><rect x="11" y="31.9" width="2.8" height="2.8"/><rect x="15" y="19.0" width="2.8" height="2.8"/><rect x="15" y="23.3" width="2.8" height="2.8"/><rect x="15" y="27.6" width="2.8" height="2.8"/><rect x="15" y="31.9" width="2.8" height="2.8"/><rect x="19" y="19.0" width="2.8" height="2.8"/><rect x="19" y="23.3" width="2.8" height="2.8"/><rect x="19" y="27.6" width="2.8" height="2.8"/><rect x="19" y="31.9" width="2.8" height="2.8"/><rect x="23" y="19.0" width="2.8" height="2.8"/><rect x="23" y="23.3" width="2.8" height="2.8"/><rect x="23" y="27.6" width="2.8" height="2.8"/><rect x="23" y="31.9" width="2.8" height="2.8"/></g><rect x="23" y="27" width="3" height="8" fill="#f08020"/></svg>
<svg class="a" style="left:314px;top:1035px;" width="40" height="39" viewBox="0 0 40 39"><path d="M8 2l28 4v24L8 26z" fill="#d0d0d0"/><path d="M10 4l24 3.5v20L10 24z" fill="#1030c0"/><ellipse cx="22" cy="33" rx="11" ry="5" fill="#c8c8c8"/><rect x="0" y="6" width="32" height="15" fill="#d8d8d8"/><rect x="1.5" y="7.5" width="29" height="12" fill="#3a86e0"/><g fill="#f4f8ff"><rect x="2.5" y="8.5" width="2.4" height="2.3"/><rect x="2.5" y="12.2" width="2.4" height="2.3"/><rect x="2.5" y="15.9" width="2.4" height="2.3"/><rect x="5.7" y="8.5" width="2.4" height="2.3"/><rect x="5.7" y="12.2" width="2.4" height="2.3"/><rect x="5.7" y="15.9" width="2.4" height="2.3"/><rect x="8.9" y="8.5" width="2.4" height="2.3"/><rect x="8.9" y="12.2" width="2.4" height="2.3"/><rect x="8.9" y="15.9" width="2.4" height="2.3"/><rect x="12.100000000000001" y="8.5" width="2.4" height="2.3"/><rect x="12.100000000000001" y="12.2" width="2.4" height="2.3"/><rect x="12.100000000000001" y="15.9" width="2.4" height="2.3"/><rect x="15.3" y="8.5" width="2.4" height="2.3"/><rect x="15.3" y="12.2" width="2.4" height="2.3"/><rect x="15.3" y="15.9" width="2.4" height="2.3"/><rect x="18.5" y="8.5" width="2.4" height="2.3"/><rect x="18.5" y="12.2" width="2.4" height="2.3"/><rect x="18.5" y="15.9" width="2.4" height="2.3"/><rect x="21.700000000000003" y="8.5" width="2.4" height="2.3"/><rect x="21.700000000000003" y="12.2" width="2.4" height="2.3"/><rect x="21.700000000000003" y="15.9" width="2.4" height="2.3"/><rect x="24.900000000000002" y="8.5" width="2.4" height="2.3"/><rect x="24.900000000000002" y="12.2" width="2.4" height="2.3"/><rect x="24.900000000000002" y="15.9" width="2.4" height="2.3"/><rect x="28.1" y="8.5" width="2.4" height="2.3"/><rect x="28.1" y="12.2" width="2.4" height="2.3"/><rect x="28.1" y="15.9" width="2.4" height="2.3"/></g></svg>
<svg class="a" style="left:391px;top:1035px;" width="40" height="40" viewBox="0 0 40 40"><path d="M20 20 L2.68 10.00 A20 20 0 0 1 37.32 10.00z" fill="#db4437"/><path d="M20 20 L37.32 10.00 A20 20 0 0 1 20.00 40.00z" fill="#f4c20d"/><path d="M20 20 L20.00 40.00 A20 20 0 0 1 2.68 10.00z" fill="#0f9d58"/><circle cx="20" cy="20" r="9.200000000000001" fill="#fff"/><circle cx="20" cy="20" r="7.4" fill="#4285f4"/></svg>
<div class="a" style="left:451px;top:1031px;width:72px;height:48px;background:#5b5b5b;border:1px solid #727272"></div>
<svg class="a" style="left:467px;top:1038px;" width="40" height="34" viewBox="0 0 40 34"><path d="M2 4h14l3 3h19v23H2z" fill="#f0c040"/><rect x="2" y="9" width="36" height="21" fill="#fcd86a"/><path d="M12 18h16v12h-4v-7h-8v7h-4z" fill="#2a7ad0"/></svg>
<svg class="a" style="left:542px;top:1035px;" width="40" height="40" viewBox="0 0 40 40"><circle cx="20" cy="20" r="18" fill="#fff"/><circle cx="20" cy="20" r="15" fill="#000"/><circle cx="20" cy="20" r="11" fill="#e51c23"/></svg>
<div class="a" style="left:603px;top:1031px;width:72px;height:48px;background:#5b5b5b;border:1px solid #727272"></div>
<svg class="a" style="left:619px;top:1035px;" width="40" height="40" viewBox="0 0 40 40"><path d="M20 20 L2.68 10.00 A20 20 0 0 1 37.32 10.00z" fill="#db4437"/><path d="M20 20 L37.32 10.00 A20 20 0 0 1 20.00 40.00z" fill="#f4c20d"/><path d="M20 20 L20.00 40.00 A20 20 0 0 1 2.68 10.00z" fill="#0f9d58"/><circle cx="20" cy="20" r="9.200000000000001" fill="#fff"/><circle cx="20" cy="20" r="7.4" fill="#4285f4"/><circle cx="31" cy="30" r="9" fill="#5a3a2a"/><text x="31" y="34" font-size="11" font-family="Liberation Sans" fill="#fff" text-anchor="middle">M</text></svg>
<div class="a" style="left:679px;top:1031px;width:72px;height:48px;background:#5b5b5b;border:1px solid #727272"></div>
<svg class="a" style="left:693px;top:1037px;" width="44" height="36" viewBox="0 0 44 36"><path d="M4 4l20-3v34L4 32z" fill="#1d6f42"/><rect x="24" y="5" width="16" height="26" fill="#fff" stroke="#1d6f42" stroke-width="1.5"/><path d="M24 11h16M24 17h16M24 23h16M32 5v26" stroke="#1d6f42" stroke-width="1.5"/><text x="13.5" y="24" font-size="15" font-weight="700" font-family="Liberation Sans" fill="#fff" text-anchor="middle">X</text></svg>
<div class="a" style="left:748px;top:1033px;width:1px;height:44px;background:#7a7a7a;"></div>
<div class="a" style="left:755px;top:1031px;width:68px;height:48px;background:#5b5b5b;border:1px solid #727272"></div>
<svg class="a" style="left:769px;top:1037px;" width="40" height="36" viewBox="0 0 40 36"><path d="M4 4l20-3v34L4 32z" fill="#d24726"/><rect x="22" y="5" width="16" height="26" fill="#fff" stroke="#d24726" stroke-width="1.5"/><path d="M26 13a5 5 0 1 1 5 5h-5z" fill="#d24726"/><path d="M26 22h9M26 26h9" stroke="#d24726" stroke-width="1.5"/><text x="13" y="24" font-size="15" font-weight="700" font-family="Liberation Sans" fill="#fff" text-anchor="middle">P</text></svg>
<div class="a" style="left:826px;top:1033px;width:1px;height:44px;background:#7a7a7a;"></div>
<div class="a" style="left:830px;top:1031px;width:72px;height:48px;background:#5b5b5b;border:1px solid #727272"></div>
<div class="a" style="left:845px;top:1035px;width:41px;height:40px;border-radius:14px;background:linear-gradient(180deg,#3a8cff,#1060e0)"></div>
<div class="t" style="left:565.5px;width:600px;text-align:center;top:1049.54px;font-size:10px;color:#fff;font-weight:700">zoom</div>
<div class="a" style="left:900px;top:1033px;width:1px;height:44px;background:#7a7a7a;"></div>
<svg class="a" style="left:1663px;top:1051px;" width="12" height="8" viewBox="0 0 12 8"><path d="M1 7l5-5 5 5z" fill="#e8e8e8"/></svg>
<svg class="a" style="left:1691px;top:1045px;" width="16" height="20" viewBox="0 0 16 20"><rect x="4" y="0" width="8" height="13" rx="4" fill="#f0f0f0"/><path d="M2 9c0 4 2.5 6 6 6s6-2 6-6 M8 15v4 M4 19h8" fill="none" stroke="#f0f0f0" stroke-width="1.5"/></svg>
<div class="t" style="left:1723.5px;top:1048.15px;font-size:14px;color:#f0f0f0;">УКР</div>
<div class="t" style="left:1503px;width:600px;text-align:center;top:1036.73px;font-size:14.5px;color:#f0f0f0;">10:38</div>
<div class="t" style="left:1503.5px;width:600px;text-align:center;top:1058.73px;font-size:14.5px;color:#f0f0f0;">19.02.2026</div>
<svg class="a" style="left:1861px;top:1045px;" width="21" height="18" viewBox="0 0 21 18"><rect x="0" y="0" width="20" height="17" fill="#f0f0f0"/><path d="M3 4h14M3 8h14M3 12h10" stroke="#3d3d3d" stroke-width="1.3"/></svg>
<div class="a" style="left:1868px;top:1052px;width:25px;height:25px;border-radius:50%;background:#3d3d3d;border:1.5px solid #bdbdbd"></div>
<div class="t" style="left:1580.5px;width:600px;text-align:center;top:1057.73px;font-size:14.5px;color:#fff;font-weight:700;letter-spacing:-0.5px">20</div>
</body></html>
